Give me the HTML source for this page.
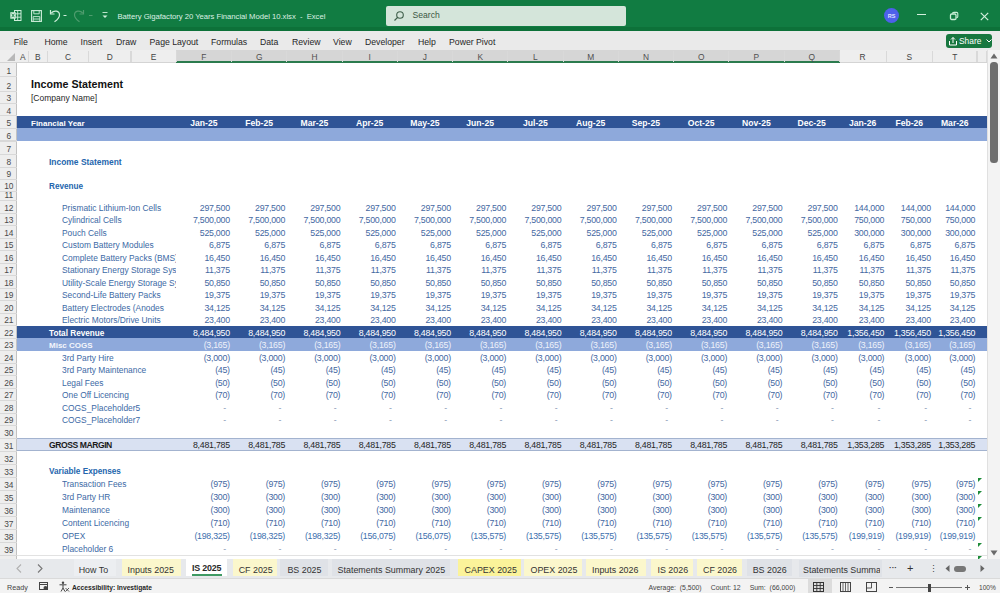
<!DOCTYPE html><html><head><meta charset="utf-8"><style>
*{margin:0;padding:0;box-sizing:border-box}
html,body{width:1000px;height:593px;overflow:hidden;background:#fff;font-family:"Liberation Sans", sans-serif;}
.a{position:absolute;white-space:pre;line-height:1.4}
.bx{position:absolute}
</style></head><body>
<div class="bx" style="left:0.00px;top:0.00px;width:1000.00px;height:31.00px;background:#117c42"></div>
<div class="bx" style="left:0.00px;top:27.00px;width:1000.00px;height:4.00px;background:#0d7139"></div>
<div class="bx" style="left:386.00px;top:6.00px;width:240.00px;height:20.00px;background:#d4e5da;border-radius:2px"></div>
<div class="a" style="left:412.50px;top:9.00px;font-size:8.6px;color:#3a5844;font-weight:400;">Search</div>
<svg class="bx" style="left:393px;top:10px" width="12" height="12" viewBox="0 0 12 12"><circle cx="7" cy="5" r="3.3" fill="none" stroke="#3f5f4a" stroke-width="1.1"/><line x1="4.6" y1="7.4" x2="1.5" y2="10.5" stroke="#3f5f4a" stroke-width="1.2"/></svg>
<div class="a" style="left:117.40px;top:12.00px;font-size:7.7px;color:#dcf0e2;font-weight:400;letter-spacing:-0.03px">Battery Gigafactory 20 Years Financial Model 10.xlsx  -  Excel</div>
<svg class="bx" style="left:10px;top:10px" width="12" height="11" viewBox="0 0 12 11">
<rect x="4.5" y="0.5" width="6.5" height="10" fill="none" stroke="#cfeedb" stroke-width="1"/>
<path d="M4.5 3.8 H11 M4.5 7.2 H11 M7.7 0.5 V10.5" stroke="#cfeedb" stroke-width="0.9"/>
<rect x="0.3" y="2.2" width="5.5" height="6.5" fill="#cfeedb"/>
<path d="M1.7 3.7 L4.4 7.2 M4.4 3.7 L1.7 7.2" stroke="#117c42" stroke-width="0.9"/></svg>
<svg class="bx" style="left:31px;top:9.5px" width="11" height="12" viewBox="0 0 11 12">
<rect x="0.6" y="0.6" width="9.8" height="10.8" fill="none" stroke="#cfeedb" stroke-width="1.1"/>
<path d="M2.8 0.6 V3.8 H8.2 V0.6" fill="none" stroke="#cfeedb" stroke-width="0.9"/>
<path d="M2.2 11.4 V6.6 H8.8 V11.4 M2.2 9 H8.8" fill="none" stroke="#cfeedb" stroke-width="0.9"/></svg>
<svg class="bx" style="left:49px;top:9px" width="20" height="14" viewBox="0 0 20 14">
<path d="M2.2 4.2 C5 0.8 10.5 1.5 10.5 6 C10.5 9 8 11 5.5 12.8" fill="none" stroke="#cfeedb" stroke-width="1.2"/>
<path d="M1.5 1 V5 H5.5" fill="none" stroke="#cfeedb" stroke-width="1.2"/>
<path d="M14.5 6.5 H17.5" stroke="#cfeedb" stroke-width="1"/></svg>
<svg class="bx" style="left:73px;top:9px" width="22" height="14" viewBox="0 0 22 14">
<path d="M9.8 4.2 C7 0.8 1.5 1.5 1.5 6 C1.5 9 4 11 6.5 12.8" fill="none" stroke="#4f9c6e" stroke-width="1.2"/>
<path d="M10.5 1 V5 H6.5" fill="none" stroke="#4f9c6e" stroke-width="1.2"/>
<path d="M16 6.5 H19.5" stroke="#4f9c6e" stroke-width="1"/></svg>
<svg class="bx" style="left:101px;top:11px" width="8" height="9" viewBox="0 0 8 9">
<line x1="1.5" y1="1.5" x2="6.5" y2="1.5" stroke="#cfeedb" stroke-width="0.9"/><path d="M1.5 4.5 L6.5 4.5 L4 7 Z" fill="#cfeedb"/></svg>
<div class="bx" style="left:884px;top:8px;width:15px;height:15px;border-radius:50%;background:#4d60ea"></div>
<div class="a" style="left:791.50px;width:200px;top:13.00px;font-size:5.5px;color:#e0e4ff;font-weight:700;text-align:center;">RS</div>
<div class="bx" style="left:917.00px;top:14.00px;width:9.00px;height:1.00px;background:#d4f0dd"></div>
<svg class="bx" style="left:949px;top:11px" width="10" height="10" viewBox="0 0 10 10">
<rect x="1.5" y="3" width="5.5" height="5.5" rx="1.2" fill="none" stroke="#c9eed6" stroke-width="1.3"/>
<path d="M3.2 2.6 Q3.6 1.4 4.8 1.4 H7.6 Q8.8 1.4 8.8 2.6 V5.4 Q8.8 6.6 7.4 6.8" fill="none" stroke="#c9eed6" stroke-width="1.1"/></svg>
<svg class="bx" style="left:980px;top:11.5px" width="9" height="9" viewBox="0 0 9 9">
<line x1="0.8" y1="0.8" x2="8.2" y2="8.2" stroke="#d4f0dd" stroke-width="1.2"/><line x1="8.2" y1="0.8" x2="0.8" y2="8.2" stroke="#d4f0dd" stroke-width="1.2"/></svg>
<div class="bx" style="left:0.00px;top:31.00px;width:1000.00px;height:19.00px;background:#eaeaea"></div>
<div class="a" style="left:13.75px;top:36.00px;font-size:8.7px;color:#262626;font-weight:400;">File</div>
<div class="a" style="left:44.50px;top:36.00px;font-size:8.7px;color:#262626;font-weight:400;">Home</div>
<div class="a" style="left:80.50px;top:36.00px;font-size:8.7px;color:#262626;font-weight:400;">Insert</div>
<div class="a" style="left:116.00px;top:36.00px;font-size:8.7px;color:#262626;font-weight:400;">Draw</div>
<div class="a" style="left:149.50px;top:36.00px;font-size:8.7px;color:#262626;font-weight:400;">Page Layout</div>
<div class="a" style="left:211.00px;top:36.00px;font-size:8.7px;color:#262626;font-weight:400;">Formulas</div>
<div class="a" style="left:260.00px;top:36.00px;font-size:8.7px;color:#262626;font-weight:400;">Data</div>
<div class="a" style="left:292.00px;top:36.00px;font-size:8.7px;color:#262626;font-weight:400;">Review</div>
<div class="a" style="left:333.00px;top:36.00px;font-size:8.7px;color:#262626;font-weight:400;">View</div>
<div class="a" style="left:365.00px;top:36.00px;font-size:8.7px;color:#262626;font-weight:400;">Developer</div>
<div class="a" style="left:418.00px;top:36.00px;font-size:8.7px;color:#262626;font-weight:400;">Help</div>
<div class="a" style="left:449.00px;top:36.00px;font-size:8.7px;color:#262626;font-weight:400;">Power Pivot</div>
<div class="bx" style="left:946.00px;top:34.00px;width:46.00px;height:14.00px;background:#17773f;border-radius:3px"></div>
<div class="a" style="left:959.00px;top:36.00px;font-size:8.4px;color:#ffffff;font-weight:400;">Share</div>
<svg class="bx" style="left:948px;top:36px" width="10" height="10" viewBox="0 0 10 10">
<path d="M1.5 5 V9 H8.5 V5" fill="none" stroke="#fff" stroke-width="1"/><path d="M5 7 V1.5 M3 3.5 L5 1.5 L7 3.5" fill="none" stroke="#fff" stroke-width="1"/></svg>
<svg class="bx" style="left:986px;top:39px" width="6" height="4" viewBox="0 0 6 4"><path d="M0.5 0.5 L3 3 L5.5 0.5" fill="none" stroke="#fff" stroke-width="1"/></svg>
<div class="bx" style="left:0.00px;top:50.00px;width:987.00px;height:13.00px;background:#eeeeee;border-bottom:1px solid #d4d4d4"></div>
<div class="bx" style="left:176.00px;top:50.00px;width:664.00px;height:13.00px;background:#d6d6d6"></div>
<div class="bx" style="left:176.00px;top:61.00px;width:664.00px;height:2.00px;background:#2b7b4e"></div>
<svg class="bx" style="left:5px;top:52px" width="11" height="10" viewBox="0 0 11 10"><path d="M10 1 L10 9 L2 9 Z" fill="#b8b8b8"/></svg>
<div class="bx" style="left:28.00px;top:51.00px;width:1.00px;height:11.00px;background:#d9d9d9"></div>
<div class="a" style="left:-77.20px;width:200px;top:52.00px;font-size:8.4px;color:#444444;font-weight:400;text-align:center;">A</div>
<div class="bx" style="left:47.00px;top:51.00px;width:1.00px;height:11.00px;background:#d9d9d9"></div>
<div class="a" style="left:-62.10px;width:200px;top:52.00px;font-size:8.4px;color:#444444;font-weight:400;text-align:center;">B</div>
<div class="bx" style="left:88.00px;top:51.00px;width:1.00px;height:11.00px;background:#d9d9d9"></div>
<div class="a" style="left:-32.10px;width:200px;top:52.00px;font-size:8.4px;color:#444444;font-weight:400;text-align:center;">C</div>
<div class="bx" style="left:130.00px;top:51.00px;width:2.00px;height:11.00px;background:#d9d9d9"></div>
<div class="a" style="left:9.80px;width:200px;top:52.00px;font-size:8.4px;color:#444444;font-weight:400;text-align:center;">D</div>
<div class="bx" style="left:176.00px;top:51.00px;width:1.00px;height:11.00px;background:#d9d9d9"></div>
<div class="a" style="left:53.65px;width:200px;top:52.00px;font-size:8.4px;color:#444444;font-weight:400;text-align:center;">E</div>
<div class="bx" style="left:231.00px;top:51.00px;width:1.00px;height:11.00px;background:#d9d9d9"></div>
<div class="a" style="left:103.93px;width:200px;top:52.00px;font-size:8.4px;color:#505050;font-weight:400;text-align:center;">F</div>
<div class="bx" style="left:286.00px;top:51.00px;width:1.00px;height:11.00px;background:#d9d9d9"></div>
<div class="a" style="left:159.18px;width:200px;top:52.00px;font-size:8.4px;color:#505050;font-weight:400;text-align:center;">G</div>
<div class="bx" style="left:342.00px;top:51.00px;width:1.00px;height:11.00px;background:#d9d9d9"></div>
<div class="a" style="left:214.43px;width:200px;top:52.00px;font-size:8.4px;color:#505050;font-weight:400;text-align:center;">H</div>
<div class="bx" style="left:397.00px;top:51.00px;width:1.00px;height:11.00px;background:#d9d9d9"></div>
<div class="a" style="left:269.68px;width:200px;top:52.00px;font-size:8.4px;color:#505050;font-weight:400;text-align:center;">I</div>
<div class="bx" style="left:452.00px;top:51.00px;width:1.00px;height:11.00px;background:#d9d9d9"></div>
<div class="a" style="left:324.93px;width:200px;top:52.00px;font-size:8.4px;color:#505050;font-weight:400;text-align:center;">J</div>
<div class="bx" style="left:507.00px;top:51.00px;width:1.00px;height:11.00px;background:#d9d9d9"></div>
<div class="a" style="left:380.18px;width:200px;top:52.00px;font-size:8.4px;color:#505050;font-weight:400;text-align:center;">K</div>
<div class="bx" style="left:563.00px;top:51.00px;width:1.00px;height:11.00px;background:#d9d9d9"></div>
<div class="a" style="left:435.42px;width:200px;top:52.00px;font-size:8.4px;color:#505050;font-weight:400;text-align:center;">L</div>
<div class="bx" style="left:618.00px;top:51.00px;width:1.00px;height:11.00px;background:#d9d9d9"></div>
<div class="a" style="left:490.67px;width:200px;top:52.00px;font-size:8.4px;color:#505050;font-weight:400;text-align:center;">M</div>
<div class="bx" style="left:673.00px;top:51.00px;width:1.00px;height:11.00px;background:#d9d9d9"></div>
<div class="a" style="left:545.92px;width:200px;top:52.00px;font-size:8.4px;color:#505050;font-weight:400;text-align:center;">N</div>
<div class="bx" style="left:728.00px;top:51.00px;width:1.00px;height:11.00px;background:#d9d9d9"></div>
<div class="a" style="left:601.17px;width:200px;top:52.00px;font-size:8.4px;color:#505050;font-weight:400;text-align:center;">O</div>
<div class="bx" style="left:784.00px;top:51.00px;width:1.00px;height:11.00px;background:#d9d9d9"></div>
<div class="a" style="left:656.42px;width:200px;top:52.00px;font-size:8.4px;color:#505050;font-weight:400;text-align:center;">P</div>
<div class="bx" style="left:839.00px;top:51.00px;width:1.00px;height:11.00px;background:#d9d9d9"></div>
<div class="a" style="left:711.67px;width:200px;top:52.00px;font-size:8.4px;color:#505050;font-weight:400;text-align:center;">Q</div>
<div class="bx" style="left:886.00px;top:51.00px;width:1.00px;height:11.00px;background:#d9d9d9"></div>
<div class="a" style="left:762.65px;width:200px;top:52.00px;font-size:8.4px;color:#444444;font-weight:400;text-align:center;">R</div>
<div class="bx" style="left:932.00px;top:51.00px;width:1.00px;height:11.00px;background:#d9d9d9"></div>
<div class="a" style="left:809.30px;width:200px;top:52.00px;font-size:8.4px;color:#444444;font-weight:400;text-align:center;">S</div>
<div class="bx" style="left:976.00px;top:51.00px;width:2.00px;height:11.00px;background:#d9d9d9"></div>
<div class="a" style="left:854.80px;width:200px;top:52.00px;font-size:8.4px;color:#444444;font-weight:400;text-align:center;">T</div>
<div class="bx" style="left:986.00px;top:51.00px;width:2.00px;height:11.00px;background:#d9d9d9"></div>
<div class="bx" style="left:0.00px;top:63.00px;width:17.00px;height:496.00px;background:#eeeeee;border-right:1px solid #c2c2c2"></div>
<div class="bx" style="left:0.00px;top:76.00px;width:17.00px;height:1.00px;background:#d8d8d8"></div>
<div class="a" style="left:-91.20px;width:200px;top:66.00px;font-size:8.4px;color:#4a4a4a;font-weight:400;text-align:center;">1</div>
<div class="bx" style="left:0.00px;top:91.00px;width:17.00px;height:1.00px;background:#d8d8d8"></div>
<div class="a" style="left:-91.20px;width:200px;top:81.00px;font-size:8.4px;color:#4a4a4a;font-weight:400;text-align:center;">2</div>
<div class="bx" style="left:0.00px;top:103.00px;width:17.00px;height:1.00px;background:#d8d8d8"></div>
<div class="a" style="left:-91.20px;width:200px;top:93.00px;font-size:8.4px;color:#4a4a4a;font-weight:400;text-align:center;">3</div>
<div class="bx" style="left:0.00px;top:115.00px;width:17.00px;height:1.00px;background:#d8d8d8"></div>
<div class="a" style="left:-91.20px;width:200px;top:106.00px;font-size:8.4px;color:#4a4a4a;font-weight:400;text-align:center;">4</div>
<div class="bx" style="left:0.00px;top:128.00px;width:17.00px;height:1.00px;background:#d8d8d8"></div>
<div class="a" style="left:-91.20px;width:200px;top:118.00px;font-size:8.4px;color:#4a4a4a;font-weight:400;text-align:center;">5</div>
<div class="bx" style="left:0.00px;top:140.00px;width:17.00px;height:2.00px;background:#d8d8d8"></div>
<div class="a" style="left:-91.20px;width:200px;top:131.00px;font-size:8.4px;color:#4a4a4a;font-weight:400;text-align:center;">6</div>
<div class="bx" style="left:0.00px;top:154.00px;width:17.00px;height:1.00px;background:#d8d8d8"></div>
<div class="a" style="left:-91.20px;width:200px;top:144.00px;font-size:8.4px;color:#4a4a4a;font-weight:400;text-align:center;">7</div>
<div class="bx" style="left:0.00px;top:167.00px;width:17.00px;height:1.00px;background:#d8d8d8"></div>
<div class="a" style="left:-91.20px;width:200px;top:157.00px;font-size:8.4px;color:#4a4a4a;font-weight:400;text-align:center;">8</div>
<div class="bx" style="left:0.00px;top:179.00px;width:17.00px;height:1.00px;background:#d8d8d8"></div>
<div class="a" style="left:-91.20px;width:200px;top:169.00px;font-size:8.4px;color:#4a4a4a;font-weight:400;text-align:center;">9</div>
<div class="bx" style="left:0.00px;top:191.00px;width:17.00px;height:1.00px;background:#d8d8d8"></div>
<div class="a" style="left:-91.20px;width:200px;top:181.00px;font-size:8.4px;color:#4a4a4a;font-weight:400;text-align:center;">10</div>
<div class="bx" style="left:0.00px;top:200.00px;width:17.00px;height:1.00px;background:#d8d8d8"></div>
<div class="a" style="left:-91.20px;width:200px;top:190.00px;font-size:8.4px;color:#4a4a4a;font-weight:400;text-align:center;">11</div>
<div class="bx" style="left:0.00px;top:213.00px;width:17.00px;height:1.00px;background:#d8d8d8"></div>
<div class="a" style="left:-91.20px;width:200px;top:203.00px;font-size:8.4px;color:#4a4a4a;font-weight:400;text-align:center;">12</div>
<div class="bx" style="left:0.00px;top:225.00px;width:17.00px;height:1.00px;background:#d8d8d8"></div>
<div class="a" style="left:-91.20px;width:200px;top:215.00px;font-size:8.4px;color:#4a4a4a;font-weight:400;text-align:center;">13</div>
<div class="bx" style="left:0.00px;top:238.00px;width:17.00px;height:1.00px;background:#d8d8d8"></div>
<div class="a" style="left:-91.20px;width:200px;top:228.00px;font-size:8.4px;color:#4a4a4a;font-weight:400;text-align:center;">14</div>
<div class="bx" style="left:0.00px;top:250.00px;width:17.00px;height:1.00px;background:#d8d8d8"></div>
<div class="a" style="left:-91.20px;width:200px;top:240.00px;font-size:8.4px;color:#4a4a4a;font-weight:400;text-align:center;">15</div>
<div class="bx" style="left:0.00px;top:263.00px;width:17.00px;height:1.00px;background:#d8d8d8"></div>
<div class="a" style="left:-91.20px;width:200px;top:253.00px;font-size:8.4px;color:#4a4a4a;font-weight:400;text-align:center;">16</div>
<div class="bx" style="left:0.00px;top:275.00px;width:17.00px;height:1.00px;background:#d8d8d8"></div>
<div class="a" style="left:-91.20px;width:200px;top:265.00px;font-size:8.4px;color:#4a4a4a;font-weight:400;text-align:center;">17</div>
<div class="bx" style="left:0.00px;top:288.00px;width:17.00px;height:1.00px;background:#d8d8d8"></div>
<div class="a" style="left:-91.20px;width:200px;top:278.00px;font-size:8.4px;color:#4a4a4a;font-weight:400;text-align:center;">18</div>
<div class="bx" style="left:0.00px;top:300.00px;width:17.00px;height:1.00px;background:#d8d8d8"></div>
<div class="a" style="left:-91.20px;width:200px;top:290.00px;font-size:8.4px;color:#4a4a4a;font-weight:400;text-align:center;">19</div>
<div class="bx" style="left:0.00px;top:313.00px;width:17.00px;height:1.00px;background:#d8d8d8"></div>
<div class="a" style="left:-91.20px;width:200px;top:303.00px;font-size:8.4px;color:#4a4a4a;font-weight:400;text-align:center;">20</div>
<div class="bx" style="left:0.00px;top:325.00px;width:17.00px;height:1.00px;background:#d8d8d8"></div>
<div class="a" style="left:-91.20px;width:200px;top:315.00px;font-size:8.4px;color:#4a4a4a;font-weight:400;text-align:center;">21</div>
<div class="bx" style="left:0.00px;top:338.00px;width:17.00px;height:1.00px;background:#d8d8d8"></div>
<div class="a" style="left:-91.20px;width:200px;top:328.00px;font-size:8.4px;color:#4a4a4a;font-weight:400;text-align:center;">22</div>
<div class="bx" style="left:0.00px;top:350.00px;width:17.00px;height:1.00px;background:#d8d8d8"></div>
<div class="a" style="left:-91.20px;width:200px;top:340.00px;font-size:8.4px;color:#4a4a4a;font-weight:400;text-align:center;">23</div>
<div class="bx" style="left:0.00px;top:363.00px;width:17.00px;height:1.00px;background:#d8d8d8"></div>
<div class="a" style="left:-91.20px;width:200px;top:353.00px;font-size:8.4px;color:#4a4a4a;font-weight:400;text-align:center;">24</div>
<div class="bx" style="left:0.00px;top:375.00px;width:17.00px;height:1.00px;background:#d8d8d8"></div>
<div class="a" style="left:-91.20px;width:200px;top:365.00px;font-size:8.4px;color:#4a4a4a;font-weight:400;text-align:center;">25</div>
<div class="bx" style="left:0.00px;top:388.00px;width:17.00px;height:1.00px;background:#d8d8d8"></div>
<div class="a" style="left:-91.20px;width:200px;top:378.00px;font-size:8.4px;color:#4a4a4a;font-weight:400;text-align:center;">26</div>
<div class="bx" style="left:0.00px;top:400.00px;width:17.00px;height:1.00px;background:#d8d8d8"></div>
<div class="a" style="left:-91.20px;width:200px;top:390.00px;font-size:8.4px;color:#4a4a4a;font-weight:400;text-align:center;">27</div>
<div class="bx" style="left:0.00px;top:413.00px;width:17.00px;height:1.00px;background:#d8d8d8"></div>
<div class="a" style="left:-91.20px;width:200px;top:403.00px;font-size:8.4px;color:#4a4a4a;font-weight:400;text-align:center;">28</div>
<div class="bx" style="left:0.00px;top:425.00px;width:17.00px;height:1.00px;background:#d8d8d8"></div>
<div class="a" style="left:-91.20px;width:200px;top:415.00px;font-size:8.4px;color:#4a4a4a;font-weight:400;text-align:center;">29</div>
<div class="bx" style="left:0.00px;top:438.00px;width:17.00px;height:1.00px;background:#d8d8d8"></div>
<div class="a" style="left:-91.20px;width:200px;top:428.00px;font-size:8.4px;color:#4a4a4a;font-weight:400;text-align:center;">30</div>
<div class="bx" style="left:0.00px;top:451.00px;width:17.00px;height:1.00px;background:#d8d8d8"></div>
<div class="a" style="left:-91.20px;width:200px;top:441.00px;font-size:8.4px;color:#4a4a4a;font-weight:400;text-align:center;">31</div>
<div class="bx" style="left:0.00px;top:464.00px;width:17.00px;height:1.00px;background:#d8d8d8"></div>
<div class="a" style="left:-91.20px;width:200px;top:454.00px;font-size:8.4px;color:#4a4a4a;font-weight:400;text-align:center;">32</div>
<div class="bx" style="left:0.00px;top:477.00px;width:17.00px;height:1.00px;background:#d8d8d8"></div>
<div class="a" style="left:-91.20px;width:200px;top:467.00px;font-size:8.4px;color:#4a4a4a;font-weight:400;text-align:center;">33</div>
<div class="bx" style="left:0.00px;top:490.00px;width:17.00px;height:1.00px;background:#d8d8d8"></div>
<div class="a" style="left:-91.20px;width:200px;top:480.00px;font-size:8.4px;color:#4a4a4a;font-weight:400;text-align:center;">34</div>
<div class="bx" style="left:0.00px;top:503.00px;width:17.00px;height:1.00px;background:#d8d8d8"></div>
<div class="a" style="left:-91.20px;width:200px;top:493.00px;font-size:8.4px;color:#4a4a4a;font-weight:400;text-align:center;">35</div>
<div class="bx" style="left:0.00px;top:516.00px;width:17.00px;height:1.00px;background:#d8d8d8"></div>
<div class="a" style="left:-91.20px;width:200px;top:506.00px;font-size:8.4px;color:#4a4a4a;font-weight:400;text-align:center;">36</div>
<div class="bx" style="left:0.00px;top:529.00px;width:17.00px;height:1.00px;background:#d8d8d8"></div>
<div class="a" style="left:-91.20px;width:200px;top:519.00px;font-size:8.4px;color:#4a4a4a;font-weight:400;text-align:center;">37</div>
<div class="bx" style="left:0.00px;top:542.00px;width:17.00px;height:1.00px;background:#d8d8d8"></div>
<div class="a" style="left:-91.20px;width:200px;top:532.00px;font-size:8.4px;color:#4a4a4a;font-weight:400;text-align:center;">38</div>
<div class="bx" style="left:0.00px;top:555.00px;width:17.00px;height:1.00px;background:#d8d8d8"></div>
<div class="a" style="left:-91.20px;width:200px;top:545.00px;font-size:8.4px;color:#4a4a4a;font-weight:400;text-align:center;">39</div>
<div class="bx" style="left:0.00px;top:568.00px;width:17.00px;height:1.00px;background:#d8d8d8"></div>
<div class="bx" style="left:17.00px;top:63.00px;width:970.00px;height:496.00px;background:#ffffff"></div>
<div class="bx" style="left:17.00px;top:116.00px;width:970.00px;height:12.00px;background:#2f5496;"></div>
<div class="bx" style="left:17.00px;top:128.00px;width:970.00px;height:13.00px;background:#8ea9db;"></div>
<div class="bx" style="left:17.00px;top:326.00px;width:970.00px;height:12.00px;background:#2f5496;"></div>
<div class="bx" style="left:17.00px;top:338.00px;width:970.00px;height:13.00px;background:#8ea9db;"></div>
<div class="bx" style="left:17.00px;top:438.00px;width:970.00px;height:13.00px;background:#d9e1f2;border-top:1px solid #a3b3cf;border-bottom:1px solid #a3b3cf"></div>
<div class="a" style="left:31.00px;top:77.00px;font-size:10.7px;color:#111;font-weight:700;">Income Statement</div>
<div class="a" style="left:31.00px;top:93.00px;font-size:8.5px;color:#262626;font-weight:400;">[Company Name]</div>
<div class="a" style="left:31.00px;top:118.00px;font-size:8.0px;color:#ffffff;font-weight:700;">Financial Year</div>
<div class="a" style="left:103.93px;width:200px;top:117.00px;font-size:8.6px;color:#ffffff;font-weight:700;text-align:center;">Jan-25</div>
<div class="a" style="left:159.18px;width:200px;top:117.00px;font-size:8.6px;color:#ffffff;font-weight:700;text-align:center;">Feb-25</div>
<div class="a" style="left:214.43px;width:200px;top:117.00px;font-size:8.6px;color:#ffffff;font-weight:700;text-align:center;">Mar-25</div>
<div class="a" style="left:269.68px;width:200px;top:117.00px;font-size:8.6px;color:#ffffff;font-weight:700;text-align:center;">Apr-25</div>
<div class="a" style="left:324.93px;width:200px;top:117.00px;font-size:8.6px;color:#ffffff;font-weight:700;text-align:center;">May-25</div>
<div class="a" style="left:380.18px;width:200px;top:117.00px;font-size:8.6px;color:#ffffff;font-weight:700;text-align:center;">Jun-25</div>
<div class="a" style="left:435.42px;width:200px;top:117.00px;font-size:8.6px;color:#ffffff;font-weight:700;text-align:center;">Jul-25</div>
<div class="a" style="left:490.67px;width:200px;top:117.00px;font-size:8.6px;color:#ffffff;font-weight:700;text-align:center;">Aug-25</div>
<div class="a" style="left:545.92px;width:200px;top:117.00px;font-size:8.6px;color:#ffffff;font-weight:700;text-align:center;">Sep-25</div>
<div class="a" style="left:601.17px;width:200px;top:117.00px;font-size:8.6px;color:#ffffff;font-weight:700;text-align:center;">Oct-25</div>
<div class="a" style="left:656.42px;width:200px;top:117.00px;font-size:8.6px;color:#ffffff;font-weight:700;text-align:center;">Nov-25</div>
<div class="a" style="left:711.67px;width:200px;top:117.00px;font-size:8.6px;color:#ffffff;font-weight:700;text-align:center;">Dec-25</div>
<div class="a" style="left:762.65px;width:200px;top:117.00px;font-size:8.6px;color:#ffffff;font-weight:700;text-align:center;">Jan-26</div>
<div class="a" style="left:809.30px;width:200px;top:117.00px;font-size:8.6px;color:#ffffff;font-weight:700;text-align:center;">Feb-26</div>
<div class="a" style="left:854.80px;width:200px;top:117.00px;font-size:8.6px;color:#ffffff;font-weight:700;text-align:center;">Mar-26</div>
<div class="a" style="left:49.00px;top:157.00px;font-size:8.45px;color:#2466ad;font-weight:700;">Income Statement</div>
<div class="a" style="left:49.00px;top:181.00px;font-size:8.2px;color:#2466ad;font-weight:700;">Revenue</div>
<div class="a" style="left:62px;top:203.00px;width:114px;overflow:hidden;line-height:1.4;font-size:8.4px;color:#3b69a5;font-weight:400">Prismatic Lithium-Ion Cells</div>
<div class="a" style="right:770.20px;top:202.00px;font-size:8.8px;color:#4468a2;font-weight:400;text-align:right;letter-spacing:-0.25px">297,500</div>
<div class="a" style="right:714.95px;top:202.00px;font-size:8.8px;color:#4468a2;font-weight:400;text-align:right;letter-spacing:-0.25px">297,500</div>
<div class="a" style="right:659.70px;top:202.00px;font-size:8.8px;color:#4468a2;font-weight:400;text-align:right;letter-spacing:-0.25px">297,500</div>
<div class="a" style="right:604.45px;top:202.00px;font-size:8.8px;color:#4468a2;font-weight:400;text-align:right;letter-spacing:-0.25px">297,500</div>
<div class="a" style="right:549.20px;top:202.00px;font-size:8.8px;color:#4468a2;font-weight:400;text-align:right;letter-spacing:-0.25px">297,500</div>
<div class="a" style="right:493.95px;top:202.00px;font-size:8.8px;color:#4468a2;font-weight:400;text-align:right;letter-spacing:-0.25px">297,500</div>
<div class="a" style="right:438.70px;top:202.00px;font-size:8.8px;color:#4468a2;font-weight:400;text-align:right;letter-spacing:-0.25px">297,500</div>
<div class="a" style="right:383.45px;top:202.00px;font-size:8.8px;color:#4468a2;font-weight:400;text-align:right;letter-spacing:-0.25px">297,500</div>
<div class="a" style="right:328.20px;top:202.00px;font-size:8.8px;color:#4468a2;font-weight:400;text-align:right;letter-spacing:-0.25px">297,500</div>
<div class="a" style="right:272.95px;top:202.00px;font-size:8.8px;color:#4468a2;font-weight:400;text-align:right;letter-spacing:-0.25px">297,500</div>
<div class="a" style="right:217.70px;top:202.00px;font-size:8.8px;color:#4468a2;font-weight:400;text-align:right;letter-spacing:-0.25px">297,500</div>
<div class="a" style="right:162.45px;top:202.00px;font-size:8.8px;color:#4468a2;font-weight:400;text-align:right;letter-spacing:-0.25px">297,500</div>
<div class="a" style="right:115.75px;top:202.00px;font-size:8.8px;color:#4468a2;font-weight:400;text-align:right;letter-spacing:-0.25px">144,000</div>
<div class="a" style="right:69.15px;top:202.00px;font-size:8.8px;color:#4468a2;font-weight:400;text-align:right;letter-spacing:-0.25px">144,000</div>
<div class="a" style="right:24.75px;top:202.00px;font-size:8.8px;color:#4468a2;font-weight:400;text-align:right;letter-spacing:-0.25px">144,000</div>
<div class="a" style="left:62px;top:215.00px;width:114px;overflow:hidden;line-height:1.4;font-size:8.4px;color:#3b69a5;font-weight:400">Cylindrical Cells</div>
<div class="a" style="right:770.20px;top:214.00px;font-size:8.8px;color:#4468a2;font-weight:400;text-align:right;letter-spacing:-0.25px">7,500,000</div>
<div class="a" style="right:714.95px;top:214.00px;font-size:8.8px;color:#4468a2;font-weight:400;text-align:right;letter-spacing:-0.25px">7,500,000</div>
<div class="a" style="right:659.70px;top:214.00px;font-size:8.8px;color:#4468a2;font-weight:400;text-align:right;letter-spacing:-0.25px">7,500,000</div>
<div class="a" style="right:604.45px;top:214.00px;font-size:8.8px;color:#4468a2;font-weight:400;text-align:right;letter-spacing:-0.25px">7,500,000</div>
<div class="a" style="right:549.20px;top:214.00px;font-size:8.8px;color:#4468a2;font-weight:400;text-align:right;letter-spacing:-0.25px">7,500,000</div>
<div class="a" style="right:493.95px;top:214.00px;font-size:8.8px;color:#4468a2;font-weight:400;text-align:right;letter-spacing:-0.25px">7,500,000</div>
<div class="a" style="right:438.70px;top:214.00px;font-size:8.8px;color:#4468a2;font-weight:400;text-align:right;letter-spacing:-0.25px">7,500,000</div>
<div class="a" style="right:383.45px;top:214.00px;font-size:8.8px;color:#4468a2;font-weight:400;text-align:right;letter-spacing:-0.25px">7,500,000</div>
<div class="a" style="right:328.20px;top:214.00px;font-size:8.8px;color:#4468a2;font-weight:400;text-align:right;letter-spacing:-0.25px">7,500,000</div>
<div class="a" style="right:272.95px;top:214.00px;font-size:8.8px;color:#4468a2;font-weight:400;text-align:right;letter-spacing:-0.25px">7,500,000</div>
<div class="a" style="right:217.70px;top:214.00px;font-size:8.8px;color:#4468a2;font-weight:400;text-align:right;letter-spacing:-0.25px">7,500,000</div>
<div class="a" style="right:162.45px;top:214.00px;font-size:8.8px;color:#4468a2;font-weight:400;text-align:right;letter-spacing:-0.25px">7,500,000</div>
<div class="a" style="right:115.75px;top:214.00px;font-size:8.8px;color:#4468a2;font-weight:400;text-align:right;letter-spacing:-0.25px">750,000</div>
<div class="a" style="right:69.15px;top:214.00px;font-size:8.8px;color:#4468a2;font-weight:400;text-align:right;letter-spacing:-0.25px">750,000</div>
<div class="a" style="right:24.75px;top:214.00px;font-size:8.8px;color:#4468a2;font-weight:400;text-align:right;letter-spacing:-0.25px">750,000</div>
<div class="a" style="left:62px;top:228.00px;width:114px;overflow:hidden;line-height:1.4;font-size:8.4px;color:#3b69a5;font-weight:400">Pouch Cells</div>
<div class="a" style="right:770.20px;top:227.00px;font-size:8.8px;color:#4468a2;font-weight:400;text-align:right;letter-spacing:-0.25px">525,000</div>
<div class="a" style="right:714.95px;top:227.00px;font-size:8.8px;color:#4468a2;font-weight:400;text-align:right;letter-spacing:-0.25px">525,000</div>
<div class="a" style="right:659.70px;top:227.00px;font-size:8.8px;color:#4468a2;font-weight:400;text-align:right;letter-spacing:-0.25px">525,000</div>
<div class="a" style="right:604.45px;top:227.00px;font-size:8.8px;color:#4468a2;font-weight:400;text-align:right;letter-spacing:-0.25px">525,000</div>
<div class="a" style="right:549.20px;top:227.00px;font-size:8.8px;color:#4468a2;font-weight:400;text-align:right;letter-spacing:-0.25px">525,000</div>
<div class="a" style="right:493.95px;top:227.00px;font-size:8.8px;color:#4468a2;font-weight:400;text-align:right;letter-spacing:-0.25px">525,000</div>
<div class="a" style="right:438.70px;top:227.00px;font-size:8.8px;color:#4468a2;font-weight:400;text-align:right;letter-spacing:-0.25px">525,000</div>
<div class="a" style="right:383.45px;top:227.00px;font-size:8.8px;color:#4468a2;font-weight:400;text-align:right;letter-spacing:-0.25px">525,000</div>
<div class="a" style="right:328.20px;top:227.00px;font-size:8.8px;color:#4468a2;font-weight:400;text-align:right;letter-spacing:-0.25px">525,000</div>
<div class="a" style="right:272.95px;top:227.00px;font-size:8.8px;color:#4468a2;font-weight:400;text-align:right;letter-spacing:-0.25px">525,000</div>
<div class="a" style="right:217.70px;top:227.00px;font-size:8.8px;color:#4468a2;font-weight:400;text-align:right;letter-spacing:-0.25px">525,000</div>
<div class="a" style="right:162.45px;top:227.00px;font-size:8.8px;color:#4468a2;font-weight:400;text-align:right;letter-spacing:-0.25px">525,000</div>
<div class="a" style="right:115.75px;top:227.00px;font-size:8.8px;color:#4468a2;font-weight:400;text-align:right;letter-spacing:-0.25px">300,000</div>
<div class="a" style="right:69.15px;top:227.00px;font-size:8.8px;color:#4468a2;font-weight:400;text-align:right;letter-spacing:-0.25px">300,000</div>
<div class="a" style="right:24.75px;top:227.00px;font-size:8.8px;color:#4468a2;font-weight:400;text-align:right;letter-spacing:-0.25px">300,000</div>
<div class="a" style="left:62px;top:240.00px;width:114px;overflow:hidden;line-height:1.4;font-size:8.4px;color:#3b69a5;font-weight:400">Custom Battery Modules</div>
<div class="a" style="right:770.20px;top:239.00px;font-size:8.8px;color:#4468a2;font-weight:400;text-align:right;letter-spacing:-0.25px">6,875</div>
<div class="a" style="right:714.95px;top:239.00px;font-size:8.8px;color:#4468a2;font-weight:400;text-align:right;letter-spacing:-0.25px">6,875</div>
<div class="a" style="right:659.70px;top:239.00px;font-size:8.8px;color:#4468a2;font-weight:400;text-align:right;letter-spacing:-0.25px">6,875</div>
<div class="a" style="right:604.45px;top:239.00px;font-size:8.8px;color:#4468a2;font-weight:400;text-align:right;letter-spacing:-0.25px">6,875</div>
<div class="a" style="right:549.20px;top:239.00px;font-size:8.8px;color:#4468a2;font-weight:400;text-align:right;letter-spacing:-0.25px">6,875</div>
<div class="a" style="right:493.95px;top:239.00px;font-size:8.8px;color:#4468a2;font-weight:400;text-align:right;letter-spacing:-0.25px">6,875</div>
<div class="a" style="right:438.70px;top:239.00px;font-size:8.8px;color:#4468a2;font-weight:400;text-align:right;letter-spacing:-0.25px">6,875</div>
<div class="a" style="right:383.45px;top:239.00px;font-size:8.8px;color:#4468a2;font-weight:400;text-align:right;letter-spacing:-0.25px">6,875</div>
<div class="a" style="right:328.20px;top:239.00px;font-size:8.8px;color:#4468a2;font-weight:400;text-align:right;letter-spacing:-0.25px">6,875</div>
<div class="a" style="right:272.95px;top:239.00px;font-size:8.8px;color:#4468a2;font-weight:400;text-align:right;letter-spacing:-0.25px">6,875</div>
<div class="a" style="right:217.70px;top:239.00px;font-size:8.8px;color:#4468a2;font-weight:400;text-align:right;letter-spacing:-0.25px">6,875</div>
<div class="a" style="right:162.45px;top:239.00px;font-size:8.8px;color:#4468a2;font-weight:400;text-align:right;letter-spacing:-0.25px">6,875</div>
<div class="a" style="right:115.75px;top:239.00px;font-size:8.8px;color:#4468a2;font-weight:400;text-align:right;letter-spacing:-0.25px">6,875</div>
<div class="a" style="right:69.15px;top:239.00px;font-size:8.8px;color:#4468a2;font-weight:400;text-align:right;letter-spacing:-0.25px">6,875</div>
<div class="a" style="right:24.75px;top:239.00px;font-size:8.8px;color:#4468a2;font-weight:400;text-align:right;letter-spacing:-0.25px">6,875</div>
<div class="a" style="left:62px;top:253.00px;width:114px;overflow:hidden;line-height:1.4;font-size:8.4px;color:#3b69a5;font-weight:400">Complete Battery Packs (BMS)</div>
<div class="a" style="right:770.20px;top:252.00px;font-size:8.8px;color:#4468a2;font-weight:400;text-align:right;letter-spacing:-0.25px">16,450</div>
<div class="a" style="right:714.95px;top:252.00px;font-size:8.8px;color:#4468a2;font-weight:400;text-align:right;letter-spacing:-0.25px">16,450</div>
<div class="a" style="right:659.70px;top:252.00px;font-size:8.8px;color:#4468a2;font-weight:400;text-align:right;letter-spacing:-0.25px">16,450</div>
<div class="a" style="right:604.45px;top:252.00px;font-size:8.8px;color:#4468a2;font-weight:400;text-align:right;letter-spacing:-0.25px">16,450</div>
<div class="a" style="right:549.20px;top:252.00px;font-size:8.8px;color:#4468a2;font-weight:400;text-align:right;letter-spacing:-0.25px">16,450</div>
<div class="a" style="right:493.95px;top:252.00px;font-size:8.8px;color:#4468a2;font-weight:400;text-align:right;letter-spacing:-0.25px">16,450</div>
<div class="a" style="right:438.70px;top:252.00px;font-size:8.8px;color:#4468a2;font-weight:400;text-align:right;letter-spacing:-0.25px">16,450</div>
<div class="a" style="right:383.45px;top:252.00px;font-size:8.8px;color:#4468a2;font-weight:400;text-align:right;letter-spacing:-0.25px">16,450</div>
<div class="a" style="right:328.20px;top:252.00px;font-size:8.8px;color:#4468a2;font-weight:400;text-align:right;letter-spacing:-0.25px">16,450</div>
<div class="a" style="right:272.95px;top:252.00px;font-size:8.8px;color:#4468a2;font-weight:400;text-align:right;letter-spacing:-0.25px">16,450</div>
<div class="a" style="right:217.70px;top:252.00px;font-size:8.8px;color:#4468a2;font-weight:400;text-align:right;letter-spacing:-0.25px">16,450</div>
<div class="a" style="right:162.45px;top:252.00px;font-size:8.8px;color:#4468a2;font-weight:400;text-align:right;letter-spacing:-0.25px">16,450</div>
<div class="a" style="right:115.75px;top:252.00px;font-size:8.8px;color:#4468a2;font-weight:400;text-align:right;letter-spacing:-0.25px">16,450</div>
<div class="a" style="right:69.15px;top:252.00px;font-size:8.8px;color:#4468a2;font-weight:400;text-align:right;letter-spacing:-0.25px">16,450</div>
<div class="a" style="right:24.75px;top:252.00px;font-size:8.8px;color:#4468a2;font-weight:400;text-align:right;letter-spacing:-0.25px">16,450</div>
<div class="a" style="left:62px;top:265.00px;width:114px;overflow:hidden;line-height:1.4;font-size:8.4px;color:#3b69a5;font-weight:400">Stationary Energy Storage Syst</div>
<div class="a" style="right:770.20px;top:264.00px;font-size:8.8px;color:#4468a2;font-weight:400;text-align:right;letter-spacing:-0.25px">11,375</div>
<div class="a" style="right:714.95px;top:264.00px;font-size:8.8px;color:#4468a2;font-weight:400;text-align:right;letter-spacing:-0.25px">11,375</div>
<div class="a" style="right:659.70px;top:264.00px;font-size:8.8px;color:#4468a2;font-weight:400;text-align:right;letter-spacing:-0.25px">11,375</div>
<div class="a" style="right:604.45px;top:264.00px;font-size:8.8px;color:#4468a2;font-weight:400;text-align:right;letter-spacing:-0.25px">11,375</div>
<div class="a" style="right:549.20px;top:264.00px;font-size:8.8px;color:#4468a2;font-weight:400;text-align:right;letter-spacing:-0.25px">11,375</div>
<div class="a" style="right:493.95px;top:264.00px;font-size:8.8px;color:#4468a2;font-weight:400;text-align:right;letter-spacing:-0.25px">11,375</div>
<div class="a" style="right:438.70px;top:264.00px;font-size:8.8px;color:#4468a2;font-weight:400;text-align:right;letter-spacing:-0.25px">11,375</div>
<div class="a" style="right:383.45px;top:264.00px;font-size:8.8px;color:#4468a2;font-weight:400;text-align:right;letter-spacing:-0.25px">11,375</div>
<div class="a" style="right:328.20px;top:264.00px;font-size:8.8px;color:#4468a2;font-weight:400;text-align:right;letter-spacing:-0.25px">11,375</div>
<div class="a" style="right:272.95px;top:264.00px;font-size:8.8px;color:#4468a2;font-weight:400;text-align:right;letter-spacing:-0.25px">11,375</div>
<div class="a" style="right:217.70px;top:264.00px;font-size:8.8px;color:#4468a2;font-weight:400;text-align:right;letter-spacing:-0.25px">11,375</div>
<div class="a" style="right:162.45px;top:264.00px;font-size:8.8px;color:#4468a2;font-weight:400;text-align:right;letter-spacing:-0.25px">11,375</div>
<div class="a" style="right:115.75px;top:264.00px;font-size:8.8px;color:#4468a2;font-weight:400;text-align:right;letter-spacing:-0.25px">11,375</div>
<div class="a" style="right:69.15px;top:264.00px;font-size:8.8px;color:#4468a2;font-weight:400;text-align:right;letter-spacing:-0.25px">11,375</div>
<div class="a" style="right:24.75px;top:264.00px;font-size:8.8px;color:#4468a2;font-weight:400;text-align:right;letter-spacing:-0.25px">11,375</div>
<div class="a" style="left:62px;top:278.00px;width:114px;overflow:hidden;line-height:1.4;font-size:8.4px;color:#3b69a5;font-weight:400">Utility-Scale Energy Storage Sy</div>
<div class="a" style="right:770.20px;top:277.00px;font-size:8.8px;color:#4468a2;font-weight:400;text-align:right;letter-spacing:-0.25px">50,850</div>
<div class="a" style="right:714.95px;top:277.00px;font-size:8.8px;color:#4468a2;font-weight:400;text-align:right;letter-spacing:-0.25px">50,850</div>
<div class="a" style="right:659.70px;top:277.00px;font-size:8.8px;color:#4468a2;font-weight:400;text-align:right;letter-spacing:-0.25px">50,850</div>
<div class="a" style="right:604.45px;top:277.00px;font-size:8.8px;color:#4468a2;font-weight:400;text-align:right;letter-spacing:-0.25px">50,850</div>
<div class="a" style="right:549.20px;top:277.00px;font-size:8.8px;color:#4468a2;font-weight:400;text-align:right;letter-spacing:-0.25px">50,850</div>
<div class="a" style="right:493.95px;top:277.00px;font-size:8.8px;color:#4468a2;font-weight:400;text-align:right;letter-spacing:-0.25px">50,850</div>
<div class="a" style="right:438.70px;top:277.00px;font-size:8.8px;color:#4468a2;font-weight:400;text-align:right;letter-spacing:-0.25px">50,850</div>
<div class="a" style="right:383.45px;top:277.00px;font-size:8.8px;color:#4468a2;font-weight:400;text-align:right;letter-spacing:-0.25px">50,850</div>
<div class="a" style="right:328.20px;top:277.00px;font-size:8.8px;color:#4468a2;font-weight:400;text-align:right;letter-spacing:-0.25px">50,850</div>
<div class="a" style="right:272.95px;top:277.00px;font-size:8.8px;color:#4468a2;font-weight:400;text-align:right;letter-spacing:-0.25px">50,850</div>
<div class="a" style="right:217.70px;top:277.00px;font-size:8.8px;color:#4468a2;font-weight:400;text-align:right;letter-spacing:-0.25px">50,850</div>
<div class="a" style="right:162.45px;top:277.00px;font-size:8.8px;color:#4468a2;font-weight:400;text-align:right;letter-spacing:-0.25px">50,850</div>
<div class="a" style="right:115.75px;top:277.00px;font-size:8.8px;color:#4468a2;font-weight:400;text-align:right;letter-spacing:-0.25px">50,850</div>
<div class="a" style="right:69.15px;top:277.00px;font-size:8.8px;color:#4468a2;font-weight:400;text-align:right;letter-spacing:-0.25px">50,850</div>
<div class="a" style="right:24.75px;top:277.00px;font-size:8.8px;color:#4468a2;font-weight:400;text-align:right;letter-spacing:-0.25px">50,850</div>
<div class="a" style="left:62px;top:290.00px;width:114px;overflow:hidden;line-height:1.4;font-size:8.4px;color:#3b69a5;font-weight:400">Second-Life Battery Packs</div>
<div class="a" style="right:770.20px;top:289.00px;font-size:8.8px;color:#4468a2;font-weight:400;text-align:right;letter-spacing:-0.25px">19,375</div>
<div class="a" style="right:714.95px;top:289.00px;font-size:8.8px;color:#4468a2;font-weight:400;text-align:right;letter-spacing:-0.25px">19,375</div>
<div class="a" style="right:659.70px;top:289.00px;font-size:8.8px;color:#4468a2;font-weight:400;text-align:right;letter-spacing:-0.25px">19,375</div>
<div class="a" style="right:604.45px;top:289.00px;font-size:8.8px;color:#4468a2;font-weight:400;text-align:right;letter-spacing:-0.25px">19,375</div>
<div class="a" style="right:549.20px;top:289.00px;font-size:8.8px;color:#4468a2;font-weight:400;text-align:right;letter-spacing:-0.25px">19,375</div>
<div class="a" style="right:493.95px;top:289.00px;font-size:8.8px;color:#4468a2;font-weight:400;text-align:right;letter-spacing:-0.25px">19,375</div>
<div class="a" style="right:438.70px;top:289.00px;font-size:8.8px;color:#4468a2;font-weight:400;text-align:right;letter-spacing:-0.25px">19,375</div>
<div class="a" style="right:383.45px;top:289.00px;font-size:8.8px;color:#4468a2;font-weight:400;text-align:right;letter-spacing:-0.25px">19,375</div>
<div class="a" style="right:328.20px;top:289.00px;font-size:8.8px;color:#4468a2;font-weight:400;text-align:right;letter-spacing:-0.25px">19,375</div>
<div class="a" style="right:272.95px;top:289.00px;font-size:8.8px;color:#4468a2;font-weight:400;text-align:right;letter-spacing:-0.25px">19,375</div>
<div class="a" style="right:217.70px;top:289.00px;font-size:8.8px;color:#4468a2;font-weight:400;text-align:right;letter-spacing:-0.25px">19,375</div>
<div class="a" style="right:162.45px;top:289.00px;font-size:8.8px;color:#4468a2;font-weight:400;text-align:right;letter-spacing:-0.25px">19,375</div>
<div class="a" style="right:115.75px;top:289.00px;font-size:8.8px;color:#4468a2;font-weight:400;text-align:right;letter-spacing:-0.25px">19,375</div>
<div class="a" style="right:69.15px;top:289.00px;font-size:8.8px;color:#4468a2;font-weight:400;text-align:right;letter-spacing:-0.25px">19,375</div>
<div class="a" style="right:24.75px;top:289.00px;font-size:8.8px;color:#4468a2;font-weight:400;text-align:right;letter-spacing:-0.25px">19,375</div>
<div class="a" style="left:62px;top:303.00px;width:114px;overflow:hidden;line-height:1.4;font-size:8.4px;color:#3b69a5;font-weight:400">Battery Electrodes (Anodes</div>
<div class="a" style="right:770.20px;top:302.00px;font-size:8.8px;color:#4468a2;font-weight:400;text-align:right;letter-spacing:-0.25px">34,125</div>
<div class="a" style="right:714.95px;top:302.00px;font-size:8.8px;color:#4468a2;font-weight:400;text-align:right;letter-spacing:-0.25px">34,125</div>
<div class="a" style="right:659.70px;top:302.00px;font-size:8.8px;color:#4468a2;font-weight:400;text-align:right;letter-spacing:-0.25px">34,125</div>
<div class="a" style="right:604.45px;top:302.00px;font-size:8.8px;color:#4468a2;font-weight:400;text-align:right;letter-spacing:-0.25px">34,125</div>
<div class="a" style="right:549.20px;top:302.00px;font-size:8.8px;color:#4468a2;font-weight:400;text-align:right;letter-spacing:-0.25px">34,125</div>
<div class="a" style="right:493.95px;top:302.00px;font-size:8.8px;color:#4468a2;font-weight:400;text-align:right;letter-spacing:-0.25px">34,125</div>
<div class="a" style="right:438.70px;top:302.00px;font-size:8.8px;color:#4468a2;font-weight:400;text-align:right;letter-spacing:-0.25px">34,125</div>
<div class="a" style="right:383.45px;top:302.00px;font-size:8.8px;color:#4468a2;font-weight:400;text-align:right;letter-spacing:-0.25px">34,125</div>
<div class="a" style="right:328.20px;top:302.00px;font-size:8.8px;color:#4468a2;font-weight:400;text-align:right;letter-spacing:-0.25px">34,125</div>
<div class="a" style="right:272.95px;top:302.00px;font-size:8.8px;color:#4468a2;font-weight:400;text-align:right;letter-spacing:-0.25px">34,125</div>
<div class="a" style="right:217.70px;top:302.00px;font-size:8.8px;color:#4468a2;font-weight:400;text-align:right;letter-spacing:-0.25px">34,125</div>
<div class="a" style="right:162.45px;top:302.00px;font-size:8.8px;color:#4468a2;font-weight:400;text-align:right;letter-spacing:-0.25px">34,125</div>
<div class="a" style="right:115.75px;top:302.00px;font-size:8.8px;color:#4468a2;font-weight:400;text-align:right;letter-spacing:-0.25px">34,125</div>
<div class="a" style="right:69.15px;top:302.00px;font-size:8.8px;color:#4468a2;font-weight:400;text-align:right;letter-spacing:-0.25px">34,125</div>
<div class="a" style="right:24.75px;top:302.00px;font-size:8.8px;color:#4468a2;font-weight:400;text-align:right;letter-spacing:-0.25px">34,125</div>
<div class="a" style="left:62px;top:315.00px;width:114px;overflow:hidden;line-height:1.4;font-size:8.4px;color:#3b69a5;font-weight:400">Electric Motors/Drive Units</div>
<div class="a" style="right:770.20px;top:314.00px;font-size:8.8px;color:#4468a2;font-weight:400;text-align:right;letter-spacing:-0.25px">23,400</div>
<div class="a" style="right:714.95px;top:314.00px;font-size:8.8px;color:#4468a2;font-weight:400;text-align:right;letter-spacing:-0.25px">23,400</div>
<div class="a" style="right:659.70px;top:314.00px;font-size:8.8px;color:#4468a2;font-weight:400;text-align:right;letter-spacing:-0.25px">23,400</div>
<div class="a" style="right:604.45px;top:314.00px;font-size:8.8px;color:#4468a2;font-weight:400;text-align:right;letter-spacing:-0.25px">23,400</div>
<div class="a" style="right:549.20px;top:314.00px;font-size:8.8px;color:#4468a2;font-weight:400;text-align:right;letter-spacing:-0.25px">23,400</div>
<div class="a" style="right:493.95px;top:314.00px;font-size:8.8px;color:#4468a2;font-weight:400;text-align:right;letter-spacing:-0.25px">23,400</div>
<div class="a" style="right:438.70px;top:314.00px;font-size:8.8px;color:#4468a2;font-weight:400;text-align:right;letter-spacing:-0.25px">23,400</div>
<div class="a" style="right:383.45px;top:314.00px;font-size:8.8px;color:#4468a2;font-weight:400;text-align:right;letter-spacing:-0.25px">23,400</div>
<div class="a" style="right:328.20px;top:314.00px;font-size:8.8px;color:#4468a2;font-weight:400;text-align:right;letter-spacing:-0.25px">23,400</div>
<div class="a" style="right:272.95px;top:314.00px;font-size:8.8px;color:#4468a2;font-weight:400;text-align:right;letter-spacing:-0.25px">23,400</div>
<div class="a" style="right:217.70px;top:314.00px;font-size:8.8px;color:#4468a2;font-weight:400;text-align:right;letter-spacing:-0.25px">23,400</div>
<div class="a" style="right:162.45px;top:314.00px;font-size:8.8px;color:#4468a2;font-weight:400;text-align:right;letter-spacing:-0.25px">23,400</div>
<div class="a" style="right:115.75px;top:314.00px;font-size:8.8px;color:#4468a2;font-weight:400;text-align:right;letter-spacing:-0.25px">23,400</div>
<div class="a" style="right:69.15px;top:314.00px;font-size:8.8px;color:#4468a2;font-weight:400;text-align:right;letter-spacing:-0.25px">23,400</div>
<div class="a" style="right:24.75px;top:314.00px;font-size:8.8px;color:#4468a2;font-weight:400;text-align:right;letter-spacing:-0.25px">23,400</div>
<div class="a" style="left:49.00px;top:328.00px;font-size:8.2px;color:#ffffff;font-weight:700;">Total Revenue</div>
<div class="a" style="right:770.20px;top:327.00px;font-size:8.8px;color:#ffffff;font-weight:400;text-align:right;letter-spacing:-0.25px">8,484,950</div>
<div class="a" style="right:714.95px;top:327.00px;font-size:8.8px;color:#ffffff;font-weight:400;text-align:right;letter-spacing:-0.25px">8,484,950</div>
<div class="a" style="right:659.70px;top:327.00px;font-size:8.8px;color:#ffffff;font-weight:400;text-align:right;letter-spacing:-0.25px">8,484,950</div>
<div class="a" style="right:604.45px;top:327.00px;font-size:8.8px;color:#ffffff;font-weight:400;text-align:right;letter-spacing:-0.25px">8,484,950</div>
<div class="a" style="right:549.20px;top:327.00px;font-size:8.8px;color:#ffffff;font-weight:400;text-align:right;letter-spacing:-0.25px">8,484,950</div>
<div class="a" style="right:493.95px;top:327.00px;font-size:8.8px;color:#ffffff;font-weight:400;text-align:right;letter-spacing:-0.25px">8,484,950</div>
<div class="a" style="right:438.70px;top:327.00px;font-size:8.8px;color:#ffffff;font-weight:400;text-align:right;letter-spacing:-0.25px">8,484,950</div>
<div class="a" style="right:383.45px;top:327.00px;font-size:8.8px;color:#ffffff;font-weight:400;text-align:right;letter-spacing:-0.25px">8,484,950</div>
<div class="a" style="right:328.20px;top:327.00px;font-size:8.8px;color:#ffffff;font-weight:400;text-align:right;letter-spacing:-0.25px">8,484,950</div>
<div class="a" style="right:272.95px;top:327.00px;font-size:8.8px;color:#ffffff;font-weight:400;text-align:right;letter-spacing:-0.25px">8,484,950</div>
<div class="a" style="right:217.70px;top:327.00px;font-size:8.8px;color:#ffffff;font-weight:400;text-align:right;letter-spacing:-0.25px">8,484,950</div>
<div class="a" style="right:162.45px;top:327.00px;font-size:8.8px;color:#ffffff;font-weight:400;text-align:right;letter-spacing:-0.25px">8,484,950</div>
<div class="a" style="right:115.75px;top:327.00px;font-size:8.8px;color:#ffffff;font-weight:400;text-align:right;letter-spacing:-0.25px">1,356,450</div>
<div class="a" style="right:69.15px;top:327.00px;font-size:8.8px;color:#ffffff;font-weight:400;text-align:right;letter-spacing:-0.25px">1,356,450</div>
<div class="a" style="right:24.75px;top:327.00px;font-size:8.8px;color:#ffffff;font-weight:400;text-align:right;letter-spacing:-0.25px">1,356,450</div>
<div class="a" style="left:49.00px;top:340.00px;font-size:8.0px;color:#f4f6fb;font-weight:700;">Misc COGS</div>
<div class="a" style="right:770.20px;top:339.00px;font-size:8.8px;color:#eef2fa;font-weight:400;text-align:right;letter-spacing:-0.25px">(3,165)</div>
<div class="a" style="right:714.95px;top:339.00px;font-size:8.8px;color:#eef2fa;font-weight:400;text-align:right;letter-spacing:-0.25px">(3,165)</div>
<div class="a" style="right:659.70px;top:339.00px;font-size:8.8px;color:#eef2fa;font-weight:400;text-align:right;letter-spacing:-0.25px">(3,165)</div>
<div class="a" style="right:604.45px;top:339.00px;font-size:8.8px;color:#eef2fa;font-weight:400;text-align:right;letter-spacing:-0.25px">(3,165)</div>
<div class="a" style="right:549.20px;top:339.00px;font-size:8.8px;color:#eef2fa;font-weight:400;text-align:right;letter-spacing:-0.25px">(3,165)</div>
<div class="a" style="right:493.95px;top:339.00px;font-size:8.8px;color:#eef2fa;font-weight:400;text-align:right;letter-spacing:-0.25px">(3,165)</div>
<div class="a" style="right:438.70px;top:339.00px;font-size:8.8px;color:#eef2fa;font-weight:400;text-align:right;letter-spacing:-0.25px">(3,165)</div>
<div class="a" style="right:383.45px;top:339.00px;font-size:8.8px;color:#eef2fa;font-weight:400;text-align:right;letter-spacing:-0.25px">(3,165)</div>
<div class="a" style="right:328.20px;top:339.00px;font-size:8.8px;color:#eef2fa;font-weight:400;text-align:right;letter-spacing:-0.25px">(3,165)</div>
<div class="a" style="right:272.95px;top:339.00px;font-size:8.8px;color:#eef2fa;font-weight:400;text-align:right;letter-spacing:-0.25px">(3,165)</div>
<div class="a" style="right:217.70px;top:339.00px;font-size:8.8px;color:#eef2fa;font-weight:400;text-align:right;letter-spacing:-0.25px">(3,165)</div>
<div class="a" style="right:162.45px;top:339.00px;font-size:8.8px;color:#eef2fa;font-weight:400;text-align:right;letter-spacing:-0.25px">(3,165)</div>
<div class="a" style="right:115.75px;top:339.00px;font-size:8.8px;color:#eef2fa;font-weight:400;text-align:right;letter-spacing:-0.25px">(3,165)</div>
<div class="a" style="right:69.15px;top:339.00px;font-size:8.8px;color:#eef2fa;font-weight:400;text-align:right;letter-spacing:-0.25px">(3,165)</div>
<div class="a" style="right:24.75px;top:339.00px;font-size:8.8px;color:#eef2fa;font-weight:400;text-align:right;letter-spacing:-0.25px">(3,165)</div>
<div class="a" style="left:62px;top:353.00px;width:114px;overflow:hidden;line-height:1.4;font-size:8.4px;color:#3b69a5;font-weight:400">3rd Party Hire</div>
<div class="a" style="right:770.20px;top:352.00px;font-size:8.8px;color:#4468a2;font-weight:400;text-align:right;letter-spacing:-0.25px">(3,000)</div>
<div class="a" style="right:714.95px;top:352.00px;font-size:8.8px;color:#4468a2;font-weight:400;text-align:right;letter-spacing:-0.25px">(3,000)</div>
<div class="a" style="right:659.70px;top:352.00px;font-size:8.8px;color:#4468a2;font-weight:400;text-align:right;letter-spacing:-0.25px">(3,000)</div>
<div class="a" style="right:604.45px;top:352.00px;font-size:8.8px;color:#4468a2;font-weight:400;text-align:right;letter-spacing:-0.25px">(3,000)</div>
<div class="a" style="right:549.20px;top:352.00px;font-size:8.8px;color:#4468a2;font-weight:400;text-align:right;letter-spacing:-0.25px">(3,000)</div>
<div class="a" style="right:493.95px;top:352.00px;font-size:8.8px;color:#4468a2;font-weight:400;text-align:right;letter-spacing:-0.25px">(3,000)</div>
<div class="a" style="right:438.70px;top:352.00px;font-size:8.8px;color:#4468a2;font-weight:400;text-align:right;letter-spacing:-0.25px">(3,000)</div>
<div class="a" style="right:383.45px;top:352.00px;font-size:8.8px;color:#4468a2;font-weight:400;text-align:right;letter-spacing:-0.25px">(3,000)</div>
<div class="a" style="right:328.20px;top:352.00px;font-size:8.8px;color:#4468a2;font-weight:400;text-align:right;letter-spacing:-0.25px">(3,000)</div>
<div class="a" style="right:272.95px;top:352.00px;font-size:8.8px;color:#4468a2;font-weight:400;text-align:right;letter-spacing:-0.25px">(3,000)</div>
<div class="a" style="right:217.70px;top:352.00px;font-size:8.8px;color:#4468a2;font-weight:400;text-align:right;letter-spacing:-0.25px">(3,000)</div>
<div class="a" style="right:162.45px;top:352.00px;font-size:8.8px;color:#4468a2;font-weight:400;text-align:right;letter-spacing:-0.25px">(3,000)</div>
<div class="a" style="right:115.75px;top:352.00px;font-size:8.8px;color:#4468a2;font-weight:400;text-align:right;letter-spacing:-0.25px">(3,000)</div>
<div class="a" style="right:69.15px;top:352.00px;font-size:8.8px;color:#4468a2;font-weight:400;text-align:right;letter-spacing:-0.25px">(3,000)</div>
<div class="a" style="right:24.75px;top:352.00px;font-size:8.8px;color:#4468a2;font-weight:400;text-align:right;letter-spacing:-0.25px">(3,000)</div>
<div class="a" style="left:62px;top:365.00px;width:114px;overflow:hidden;line-height:1.4;font-size:8.4px;color:#3b69a5;font-weight:400">3rd Party Maintenance</div>
<div class="a" style="right:770.20px;top:364.00px;font-size:8.8px;color:#4468a2;font-weight:400;text-align:right;letter-spacing:-0.25px">(45)</div>
<div class="a" style="right:714.95px;top:364.00px;font-size:8.8px;color:#4468a2;font-weight:400;text-align:right;letter-spacing:-0.25px">(45)</div>
<div class="a" style="right:659.70px;top:364.00px;font-size:8.8px;color:#4468a2;font-weight:400;text-align:right;letter-spacing:-0.25px">(45)</div>
<div class="a" style="right:604.45px;top:364.00px;font-size:8.8px;color:#4468a2;font-weight:400;text-align:right;letter-spacing:-0.25px">(45)</div>
<div class="a" style="right:549.20px;top:364.00px;font-size:8.8px;color:#4468a2;font-weight:400;text-align:right;letter-spacing:-0.25px">(45)</div>
<div class="a" style="right:493.95px;top:364.00px;font-size:8.8px;color:#4468a2;font-weight:400;text-align:right;letter-spacing:-0.25px">(45)</div>
<div class="a" style="right:438.70px;top:364.00px;font-size:8.8px;color:#4468a2;font-weight:400;text-align:right;letter-spacing:-0.25px">(45)</div>
<div class="a" style="right:383.45px;top:364.00px;font-size:8.8px;color:#4468a2;font-weight:400;text-align:right;letter-spacing:-0.25px">(45)</div>
<div class="a" style="right:328.20px;top:364.00px;font-size:8.8px;color:#4468a2;font-weight:400;text-align:right;letter-spacing:-0.25px">(45)</div>
<div class="a" style="right:272.95px;top:364.00px;font-size:8.8px;color:#4468a2;font-weight:400;text-align:right;letter-spacing:-0.25px">(45)</div>
<div class="a" style="right:217.70px;top:364.00px;font-size:8.8px;color:#4468a2;font-weight:400;text-align:right;letter-spacing:-0.25px">(45)</div>
<div class="a" style="right:162.45px;top:364.00px;font-size:8.8px;color:#4468a2;font-weight:400;text-align:right;letter-spacing:-0.25px">(45)</div>
<div class="a" style="right:115.75px;top:364.00px;font-size:8.8px;color:#4468a2;font-weight:400;text-align:right;letter-spacing:-0.25px">(45)</div>
<div class="a" style="right:69.15px;top:364.00px;font-size:8.8px;color:#4468a2;font-weight:400;text-align:right;letter-spacing:-0.25px">(45)</div>
<div class="a" style="right:24.75px;top:364.00px;font-size:8.8px;color:#4468a2;font-weight:400;text-align:right;letter-spacing:-0.25px">(45)</div>
<div class="a" style="left:62px;top:378.00px;width:114px;overflow:hidden;line-height:1.4;font-size:8.4px;color:#3b69a5;font-weight:400">Legal Fees</div>
<div class="a" style="right:770.20px;top:377.00px;font-size:8.8px;color:#4468a2;font-weight:400;text-align:right;letter-spacing:-0.25px">(50)</div>
<div class="a" style="right:714.95px;top:377.00px;font-size:8.8px;color:#4468a2;font-weight:400;text-align:right;letter-spacing:-0.25px">(50)</div>
<div class="a" style="right:659.70px;top:377.00px;font-size:8.8px;color:#4468a2;font-weight:400;text-align:right;letter-spacing:-0.25px">(50)</div>
<div class="a" style="right:604.45px;top:377.00px;font-size:8.8px;color:#4468a2;font-weight:400;text-align:right;letter-spacing:-0.25px">(50)</div>
<div class="a" style="right:549.20px;top:377.00px;font-size:8.8px;color:#4468a2;font-weight:400;text-align:right;letter-spacing:-0.25px">(50)</div>
<div class="a" style="right:493.95px;top:377.00px;font-size:8.8px;color:#4468a2;font-weight:400;text-align:right;letter-spacing:-0.25px">(50)</div>
<div class="a" style="right:438.70px;top:377.00px;font-size:8.8px;color:#4468a2;font-weight:400;text-align:right;letter-spacing:-0.25px">(50)</div>
<div class="a" style="right:383.45px;top:377.00px;font-size:8.8px;color:#4468a2;font-weight:400;text-align:right;letter-spacing:-0.25px">(50)</div>
<div class="a" style="right:328.20px;top:377.00px;font-size:8.8px;color:#4468a2;font-weight:400;text-align:right;letter-spacing:-0.25px">(50)</div>
<div class="a" style="right:272.95px;top:377.00px;font-size:8.8px;color:#4468a2;font-weight:400;text-align:right;letter-spacing:-0.25px">(50)</div>
<div class="a" style="right:217.70px;top:377.00px;font-size:8.8px;color:#4468a2;font-weight:400;text-align:right;letter-spacing:-0.25px">(50)</div>
<div class="a" style="right:162.45px;top:377.00px;font-size:8.8px;color:#4468a2;font-weight:400;text-align:right;letter-spacing:-0.25px">(50)</div>
<div class="a" style="right:115.75px;top:377.00px;font-size:8.8px;color:#4468a2;font-weight:400;text-align:right;letter-spacing:-0.25px">(50)</div>
<div class="a" style="right:69.15px;top:377.00px;font-size:8.8px;color:#4468a2;font-weight:400;text-align:right;letter-spacing:-0.25px">(50)</div>
<div class="a" style="right:24.75px;top:377.00px;font-size:8.8px;color:#4468a2;font-weight:400;text-align:right;letter-spacing:-0.25px">(50)</div>
<div class="a" style="left:62px;top:390.00px;width:114px;overflow:hidden;line-height:1.4;font-size:8.4px;color:#3b69a5;font-weight:400">One Off Licencing</div>
<div class="a" style="right:770.20px;top:389.00px;font-size:8.8px;color:#4468a2;font-weight:400;text-align:right;letter-spacing:-0.25px">(70)</div>
<div class="a" style="right:714.95px;top:389.00px;font-size:8.8px;color:#4468a2;font-weight:400;text-align:right;letter-spacing:-0.25px">(70)</div>
<div class="a" style="right:659.70px;top:389.00px;font-size:8.8px;color:#4468a2;font-weight:400;text-align:right;letter-spacing:-0.25px">(70)</div>
<div class="a" style="right:604.45px;top:389.00px;font-size:8.8px;color:#4468a2;font-weight:400;text-align:right;letter-spacing:-0.25px">(70)</div>
<div class="a" style="right:549.20px;top:389.00px;font-size:8.8px;color:#4468a2;font-weight:400;text-align:right;letter-spacing:-0.25px">(70)</div>
<div class="a" style="right:493.95px;top:389.00px;font-size:8.8px;color:#4468a2;font-weight:400;text-align:right;letter-spacing:-0.25px">(70)</div>
<div class="a" style="right:438.70px;top:389.00px;font-size:8.8px;color:#4468a2;font-weight:400;text-align:right;letter-spacing:-0.25px">(70)</div>
<div class="a" style="right:383.45px;top:389.00px;font-size:8.8px;color:#4468a2;font-weight:400;text-align:right;letter-spacing:-0.25px">(70)</div>
<div class="a" style="right:328.20px;top:389.00px;font-size:8.8px;color:#4468a2;font-weight:400;text-align:right;letter-spacing:-0.25px">(70)</div>
<div class="a" style="right:272.95px;top:389.00px;font-size:8.8px;color:#4468a2;font-weight:400;text-align:right;letter-spacing:-0.25px">(70)</div>
<div class="a" style="right:217.70px;top:389.00px;font-size:8.8px;color:#4468a2;font-weight:400;text-align:right;letter-spacing:-0.25px">(70)</div>
<div class="a" style="right:162.45px;top:389.00px;font-size:8.8px;color:#4468a2;font-weight:400;text-align:right;letter-spacing:-0.25px">(70)</div>
<div class="a" style="right:115.75px;top:389.00px;font-size:8.8px;color:#4468a2;font-weight:400;text-align:right;letter-spacing:-0.25px">(70)</div>
<div class="a" style="right:69.15px;top:389.00px;font-size:8.8px;color:#4468a2;font-weight:400;text-align:right;letter-spacing:-0.25px">(70)</div>
<div class="a" style="right:24.75px;top:389.00px;font-size:8.8px;color:#4468a2;font-weight:400;text-align:right;letter-spacing:-0.25px">(70)</div>
<div class="a" style="left:62px;top:403.00px;width:114px;overflow:hidden;line-height:1.4;font-size:8.4px;color:#3b69a5;font-weight:400">COGS_Placeholder5</div>
<div class="a" style="right:774.20px;top:402.00px;font-size:8.8px;color:#8a9ab5;font-weight:400;text-align:right;letter-spacing:-0.25px">-</div>
<div class="a" style="right:718.95px;top:402.00px;font-size:8.8px;color:#8a9ab5;font-weight:400;text-align:right;letter-spacing:-0.25px">-</div>
<div class="a" style="right:663.70px;top:402.00px;font-size:8.8px;color:#8a9ab5;font-weight:400;text-align:right;letter-spacing:-0.25px">-</div>
<div class="a" style="right:608.45px;top:402.00px;font-size:8.8px;color:#8a9ab5;font-weight:400;text-align:right;letter-spacing:-0.25px">-</div>
<div class="a" style="right:553.20px;top:402.00px;font-size:8.8px;color:#8a9ab5;font-weight:400;text-align:right;letter-spacing:-0.25px">-</div>
<div class="a" style="right:497.95px;top:402.00px;font-size:8.8px;color:#8a9ab5;font-weight:400;text-align:right;letter-spacing:-0.25px">-</div>
<div class="a" style="right:442.70px;top:402.00px;font-size:8.8px;color:#8a9ab5;font-weight:400;text-align:right;letter-spacing:-0.25px">-</div>
<div class="a" style="right:387.45px;top:402.00px;font-size:8.8px;color:#8a9ab5;font-weight:400;text-align:right;letter-spacing:-0.25px">-</div>
<div class="a" style="right:332.20px;top:402.00px;font-size:8.8px;color:#8a9ab5;font-weight:400;text-align:right;letter-spacing:-0.25px">-</div>
<div class="a" style="right:276.95px;top:402.00px;font-size:8.8px;color:#8a9ab5;font-weight:400;text-align:right;letter-spacing:-0.25px">-</div>
<div class="a" style="right:221.70px;top:402.00px;font-size:8.8px;color:#8a9ab5;font-weight:400;text-align:right;letter-spacing:-0.25px">-</div>
<div class="a" style="right:166.45px;top:402.00px;font-size:8.8px;color:#8a9ab5;font-weight:400;text-align:right;letter-spacing:-0.25px">-</div>
<div class="a" style="right:119.75px;top:402.00px;font-size:8.8px;color:#8a9ab5;font-weight:400;text-align:right;letter-spacing:-0.25px">-</div>
<div class="a" style="right:73.15px;top:402.00px;font-size:8.8px;color:#8a9ab5;font-weight:400;text-align:right;letter-spacing:-0.25px">-</div>
<div class="a" style="right:28.75px;top:402.00px;font-size:8.8px;color:#8a9ab5;font-weight:400;text-align:right;letter-spacing:-0.25px">-</div>
<div class="a" style="left:62px;top:415.00px;width:114px;overflow:hidden;line-height:1.4;font-size:8.4px;color:#3b69a5;font-weight:400">COGS_Placeholder7</div>
<div class="a" style="right:774.20px;top:414.00px;font-size:8.8px;color:#8a9ab5;font-weight:400;text-align:right;letter-spacing:-0.25px">-</div>
<div class="a" style="right:718.95px;top:414.00px;font-size:8.8px;color:#8a9ab5;font-weight:400;text-align:right;letter-spacing:-0.25px">-</div>
<div class="a" style="right:663.70px;top:414.00px;font-size:8.8px;color:#8a9ab5;font-weight:400;text-align:right;letter-spacing:-0.25px">-</div>
<div class="a" style="right:608.45px;top:414.00px;font-size:8.8px;color:#8a9ab5;font-weight:400;text-align:right;letter-spacing:-0.25px">-</div>
<div class="a" style="right:553.20px;top:414.00px;font-size:8.8px;color:#8a9ab5;font-weight:400;text-align:right;letter-spacing:-0.25px">-</div>
<div class="a" style="right:497.95px;top:414.00px;font-size:8.8px;color:#8a9ab5;font-weight:400;text-align:right;letter-spacing:-0.25px">-</div>
<div class="a" style="right:442.70px;top:414.00px;font-size:8.8px;color:#8a9ab5;font-weight:400;text-align:right;letter-spacing:-0.25px">-</div>
<div class="a" style="right:387.45px;top:414.00px;font-size:8.8px;color:#8a9ab5;font-weight:400;text-align:right;letter-spacing:-0.25px">-</div>
<div class="a" style="right:332.20px;top:414.00px;font-size:8.8px;color:#8a9ab5;font-weight:400;text-align:right;letter-spacing:-0.25px">-</div>
<div class="a" style="right:276.95px;top:414.00px;font-size:8.8px;color:#8a9ab5;font-weight:400;text-align:right;letter-spacing:-0.25px">-</div>
<div class="a" style="right:221.70px;top:414.00px;font-size:8.8px;color:#8a9ab5;font-weight:400;text-align:right;letter-spacing:-0.25px">-</div>
<div class="a" style="right:166.45px;top:414.00px;font-size:8.8px;color:#8a9ab5;font-weight:400;text-align:right;letter-spacing:-0.25px">-</div>
<div class="a" style="right:119.75px;top:414.00px;font-size:8.8px;color:#8a9ab5;font-weight:400;text-align:right;letter-spacing:-0.25px">-</div>
<div class="a" style="right:73.15px;top:414.00px;font-size:8.8px;color:#8a9ab5;font-weight:400;text-align:right;letter-spacing:-0.25px">-</div>
<div class="a" style="right:28.75px;top:414.00px;font-size:8.8px;color:#8a9ab5;font-weight:400;text-align:right;letter-spacing:-0.25px">-</div>
<div class="a" style="left:49.00px;top:439.00px;font-size:8.6px;color:#1a1a1a;font-weight:700;letter-spacing:-0.45px">GROSS MARGIN</div>
<div class="a" style="right:770.20px;top:439.00px;font-size:8.8px;color:#262626;font-weight:400;text-align:right;letter-spacing:-0.25px">8,481,785</div>
<div class="a" style="right:714.95px;top:439.00px;font-size:8.8px;color:#262626;font-weight:400;text-align:right;letter-spacing:-0.25px">8,481,785</div>
<div class="a" style="right:659.70px;top:439.00px;font-size:8.8px;color:#262626;font-weight:400;text-align:right;letter-spacing:-0.25px">8,481,785</div>
<div class="a" style="right:604.45px;top:439.00px;font-size:8.8px;color:#262626;font-weight:400;text-align:right;letter-spacing:-0.25px">8,481,785</div>
<div class="a" style="right:549.20px;top:439.00px;font-size:8.8px;color:#262626;font-weight:400;text-align:right;letter-spacing:-0.25px">8,481,785</div>
<div class="a" style="right:493.95px;top:439.00px;font-size:8.8px;color:#262626;font-weight:400;text-align:right;letter-spacing:-0.25px">8,481,785</div>
<div class="a" style="right:438.70px;top:439.00px;font-size:8.8px;color:#262626;font-weight:400;text-align:right;letter-spacing:-0.25px">8,481,785</div>
<div class="a" style="right:383.45px;top:439.00px;font-size:8.8px;color:#262626;font-weight:400;text-align:right;letter-spacing:-0.25px">8,481,785</div>
<div class="a" style="right:328.20px;top:439.00px;font-size:8.8px;color:#262626;font-weight:400;text-align:right;letter-spacing:-0.25px">8,481,785</div>
<div class="a" style="right:272.95px;top:439.00px;font-size:8.8px;color:#262626;font-weight:400;text-align:right;letter-spacing:-0.25px">8,481,785</div>
<div class="a" style="right:217.70px;top:439.00px;font-size:8.8px;color:#262626;font-weight:400;text-align:right;letter-spacing:-0.25px">8,481,785</div>
<div class="a" style="right:162.45px;top:439.00px;font-size:8.8px;color:#262626;font-weight:400;text-align:right;letter-spacing:-0.25px">8,481,785</div>
<div class="a" style="right:115.75px;top:439.00px;font-size:8.8px;color:#262626;font-weight:400;text-align:right;letter-spacing:-0.25px">1,353,285</div>
<div class="a" style="right:69.15px;top:439.00px;font-size:8.8px;color:#262626;font-weight:400;text-align:right;letter-spacing:-0.25px">1,353,285</div>
<div class="a" style="right:24.75px;top:439.00px;font-size:8.8px;color:#262626;font-weight:400;text-align:right;letter-spacing:-0.25px">1,353,285</div>
<div class="a" style="left:49.00px;top:466.00px;font-size:8.2px;color:#2466ad;font-weight:700;">Variable Expenses</div>
<div class="a" style="left:62px;top:479.00px;width:114px;overflow:hidden;line-height:1.4;font-size:8.4px;color:#3b69a5;font-weight:400">Transaction Fees</div>
<div class="a" style="right:770.20px;top:478.00px;font-size:8.8px;color:#4468a2;font-weight:400;text-align:right;letter-spacing:-0.25px">(975)</div>
<div class="a" style="right:714.95px;top:478.00px;font-size:8.8px;color:#4468a2;font-weight:400;text-align:right;letter-spacing:-0.25px">(975)</div>
<div class="a" style="right:659.70px;top:478.00px;font-size:8.8px;color:#4468a2;font-weight:400;text-align:right;letter-spacing:-0.25px">(975)</div>
<div class="a" style="right:604.45px;top:478.00px;font-size:8.8px;color:#4468a2;font-weight:400;text-align:right;letter-spacing:-0.25px">(975)</div>
<div class="a" style="right:549.20px;top:478.00px;font-size:8.8px;color:#4468a2;font-weight:400;text-align:right;letter-spacing:-0.25px">(975)</div>
<div class="a" style="right:493.95px;top:478.00px;font-size:8.8px;color:#4468a2;font-weight:400;text-align:right;letter-spacing:-0.25px">(975)</div>
<div class="a" style="right:438.70px;top:478.00px;font-size:8.8px;color:#4468a2;font-weight:400;text-align:right;letter-spacing:-0.25px">(975)</div>
<div class="a" style="right:383.45px;top:478.00px;font-size:8.8px;color:#4468a2;font-weight:400;text-align:right;letter-spacing:-0.25px">(975)</div>
<div class="a" style="right:328.20px;top:478.00px;font-size:8.8px;color:#4468a2;font-weight:400;text-align:right;letter-spacing:-0.25px">(975)</div>
<div class="a" style="right:272.95px;top:478.00px;font-size:8.8px;color:#4468a2;font-weight:400;text-align:right;letter-spacing:-0.25px">(975)</div>
<div class="a" style="right:217.70px;top:478.00px;font-size:8.8px;color:#4468a2;font-weight:400;text-align:right;letter-spacing:-0.25px">(975)</div>
<div class="a" style="right:162.45px;top:478.00px;font-size:8.8px;color:#4468a2;font-weight:400;text-align:right;letter-spacing:-0.25px">(975)</div>
<div class="a" style="right:115.75px;top:478.00px;font-size:8.8px;color:#4468a2;font-weight:400;text-align:right;letter-spacing:-0.25px">(975)</div>
<div class="a" style="right:69.15px;top:478.00px;font-size:8.8px;color:#4468a2;font-weight:400;text-align:right;letter-spacing:-0.25px">(975)</div>
<div class="a" style="right:24.75px;top:478.00px;font-size:8.8px;color:#4468a2;font-weight:400;text-align:right;letter-spacing:-0.25px">(975)</div>
<div class="a" style="left:62px;top:492.00px;width:114px;overflow:hidden;line-height:1.4;font-size:8.4px;color:#3b69a5;font-weight:400">3rd Party HR</div>
<div class="a" style="right:770.20px;top:491.00px;font-size:8.8px;color:#4468a2;font-weight:400;text-align:right;letter-spacing:-0.25px">(300)</div>
<div class="a" style="right:714.95px;top:491.00px;font-size:8.8px;color:#4468a2;font-weight:400;text-align:right;letter-spacing:-0.25px">(300)</div>
<div class="a" style="right:659.70px;top:491.00px;font-size:8.8px;color:#4468a2;font-weight:400;text-align:right;letter-spacing:-0.25px">(300)</div>
<div class="a" style="right:604.45px;top:491.00px;font-size:8.8px;color:#4468a2;font-weight:400;text-align:right;letter-spacing:-0.25px">(300)</div>
<div class="a" style="right:549.20px;top:491.00px;font-size:8.8px;color:#4468a2;font-weight:400;text-align:right;letter-spacing:-0.25px">(300)</div>
<div class="a" style="right:493.95px;top:491.00px;font-size:8.8px;color:#4468a2;font-weight:400;text-align:right;letter-spacing:-0.25px">(300)</div>
<div class="a" style="right:438.70px;top:491.00px;font-size:8.8px;color:#4468a2;font-weight:400;text-align:right;letter-spacing:-0.25px">(300)</div>
<div class="a" style="right:383.45px;top:491.00px;font-size:8.8px;color:#4468a2;font-weight:400;text-align:right;letter-spacing:-0.25px">(300)</div>
<div class="a" style="right:328.20px;top:491.00px;font-size:8.8px;color:#4468a2;font-weight:400;text-align:right;letter-spacing:-0.25px">(300)</div>
<div class="a" style="right:272.95px;top:491.00px;font-size:8.8px;color:#4468a2;font-weight:400;text-align:right;letter-spacing:-0.25px">(300)</div>
<div class="a" style="right:217.70px;top:491.00px;font-size:8.8px;color:#4468a2;font-weight:400;text-align:right;letter-spacing:-0.25px">(300)</div>
<div class="a" style="right:162.45px;top:491.00px;font-size:8.8px;color:#4468a2;font-weight:400;text-align:right;letter-spacing:-0.25px">(300)</div>
<div class="a" style="right:115.75px;top:491.00px;font-size:8.8px;color:#4468a2;font-weight:400;text-align:right;letter-spacing:-0.25px">(300)</div>
<div class="a" style="right:69.15px;top:491.00px;font-size:8.8px;color:#4468a2;font-weight:400;text-align:right;letter-spacing:-0.25px">(300)</div>
<div class="a" style="right:24.75px;top:491.00px;font-size:8.8px;color:#4468a2;font-weight:400;text-align:right;letter-spacing:-0.25px">(300)</div>
<div class="a" style="left:62px;top:505.00px;width:114px;overflow:hidden;line-height:1.4;font-size:8.4px;color:#3b69a5;font-weight:400">Maintenance</div>
<div class="a" style="right:770.20px;top:504.00px;font-size:8.8px;color:#4468a2;font-weight:400;text-align:right;letter-spacing:-0.25px">(300)</div>
<div class="a" style="right:714.95px;top:504.00px;font-size:8.8px;color:#4468a2;font-weight:400;text-align:right;letter-spacing:-0.25px">(300)</div>
<div class="a" style="right:659.70px;top:504.00px;font-size:8.8px;color:#4468a2;font-weight:400;text-align:right;letter-spacing:-0.25px">(300)</div>
<div class="a" style="right:604.45px;top:504.00px;font-size:8.8px;color:#4468a2;font-weight:400;text-align:right;letter-spacing:-0.25px">(300)</div>
<div class="a" style="right:549.20px;top:504.00px;font-size:8.8px;color:#4468a2;font-weight:400;text-align:right;letter-spacing:-0.25px">(300)</div>
<div class="a" style="right:493.95px;top:504.00px;font-size:8.8px;color:#4468a2;font-weight:400;text-align:right;letter-spacing:-0.25px">(300)</div>
<div class="a" style="right:438.70px;top:504.00px;font-size:8.8px;color:#4468a2;font-weight:400;text-align:right;letter-spacing:-0.25px">(300)</div>
<div class="a" style="right:383.45px;top:504.00px;font-size:8.8px;color:#4468a2;font-weight:400;text-align:right;letter-spacing:-0.25px">(300)</div>
<div class="a" style="right:328.20px;top:504.00px;font-size:8.8px;color:#4468a2;font-weight:400;text-align:right;letter-spacing:-0.25px">(300)</div>
<div class="a" style="right:272.95px;top:504.00px;font-size:8.8px;color:#4468a2;font-weight:400;text-align:right;letter-spacing:-0.25px">(300)</div>
<div class="a" style="right:217.70px;top:504.00px;font-size:8.8px;color:#4468a2;font-weight:400;text-align:right;letter-spacing:-0.25px">(300)</div>
<div class="a" style="right:162.45px;top:504.00px;font-size:8.8px;color:#4468a2;font-weight:400;text-align:right;letter-spacing:-0.25px">(300)</div>
<div class="a" style="right:115.75px;top:504.00px;font-size:8.8px;color:#4468a2;font-weight:400;text-align:right;letter-spacing:-0.25px">(300)</div>
<div class="a" style="right:69.15px;top:504.00px;font-size:8.8px;color:#4468a2;font-weight:400;text-align:right;letter-spacing:-0.25px">(300)</div>
<div class="a" style="right:24.75px;top:504.00px;font-size:8.8px;color:#4468a2;font-weight:400;text-align:right;letter-spacing:-0.25px">(300)</div>
<div class="a" style="left:62px;top:518.00px;width:114px;overflow:hidden;line-height:1.4;font-size:8.4px;color:#3b69a5;font-weight:400">Content Licencing</div>
<div class="a" style="right:770.20px;top:517.00px;font-size:8.8px;color:#4468a2;font-weight:400;text-align:right;letter-spacing:-0.25px">(710)</div>
<div class="a" style="right:714.95px;top:517.00px;font-size:8.8px;color:#4468a2;font-weight:400;text-align:right;letter-spacing:-0.25px">(710)</div>
<div class="a" style="right:659.70px;top:517.00px;font-size:8.8px;color:#4468a2;font-weight:400;text-align:right;letter-spacing:-0.25px">(710)</div>
<div class="a" style="right:604.45px;top:517.00px;font-size:8.8px;color:#4468a2;font-weight:400;text-align:right;letter-spacing:-0.25px">(710)</div>
<div class="a" style="right:549.20px;top:517.00px;font-size:8.8px;color:#4468a2;font-weight:400;text-align:right;letter-spacing:-0.25px">(710)</div>
<div class="a" style="right:493.95px;top:517.00px;font-size:8.8px;color:#4468a2;font-weight:400;text-align:right;letter-spacing:-0.25px">(710)</div>
<div class="a" style="right:438.70px;top:517.00px;font-size:8.8px;color:#4468a2;font-weight:400;text-align:right;letter-spacing:-0.25px">(710)</div>
<div class="a" style="right:383.45px;top:517.00px;font-size:8.8px;color:#4468a2;font-weight:400;text-align:right;letter-spacing:-0.25px">(710)</div>
<div class="a" style="right:328.20px;top:517.00px;font-size:8.8px;color:#4468a2;font-weight:400;text-align:right;letter-spacing:-0.25px">(710)</div>
<div class="a" style="right:272.95px;top:517.00px;font-size:8.8px;color:#4468a2;font-weight:400;text-align:right;letter-spacing:-0.25px">(710)</div>
<div class="a" style="right:217.70px;top:517.00px;font-size:8.8px;color:#4468a2;font-weight:400;text-align:right;letter-spacing:-0.25px">(710)</div>
<div class="a" style="right:162.45px;top:517.00px;font-size:8.8px;color:#4468a2;font-weight:400;text-align:right;letter-spacing:-0.25px">(710)</div>
<div class="a" style="right:115.75px;top:517.00px;font-size:8.8px;color:#4468a2;font-weight:400;text-align:right;letter-spacing:-0.25px">(710)</div>
<div class="a" style="right:69.15px;top:517.00px;font-size:8.8px;color:#4468a2;font-weight:400;text-align:right;letter-spacing:-0.25px">(710)</div>
<div class="a" style="right:24.75px;top:517.00px;font-size:8.8px;color:#4468a2;font-weight:400;text-align:right;letter-spacing:-0.25px">(710)</div>
<div class="a" style="left:62px;top:531.00px;width:114px;overflow:hidden;line-height:1.4;font-size:8.4px;color:#3b69a5;font-weight:400">OPEX</div>
<div class="a" style="right:770.20px;top:530.00px;font-size:8.8px;color:#3d6fae;font-weight:400;text-align:right;letter-spacing:-0.25px">(198,325)</div>
<div class="a" style="right:714.95px;top:530.00px;font-size:8.8px;color:#3d6fae;font-weight:400;text-align:right;letter-spacing:-0.25px">(198,325)</div>
<div class="a" style="right:659.70px;top:530.00px;font-size:8.8px;color:#3d6fae;font-weight:400;text-align:right;letter-spacing:-0.25px">(198,325)</div>
<div class="a" style="right:604.45px;top:530.00px;font-size:8.8px;color:#3d6fae;font-weight:400;text-align:right;letter-spacing:-0.25px">(156,075)</div>
<div class="a" style="right:549.20px;top:530.00px;font-size:8.8px;color:#3d6fae;font-weight:400;text-align:right;letter-spacing:-0.25px">(156,075)</div>
<div class="a" style="right:493.95px;top:530.00px;font-size:8.8px;color:#3d6fae;font-weight:400;text-align:right;letter-spacing:-0.25px">(135,575)</div>
<div class="a" style="right:438.70px;top:530.00px;font-size:8.8px;color:#3d6fae;font-weight:400;text-align:right;letter-spacing:-0.25px">(135,575)</div>
<div class="a" style="right:383.45px;top:530.00px;font-size:8.8px;color:#3d6fae;font-weight:400;text-align:right;letter-spacing:-0.25px">(135,575)</div>
<div class="a" style="right:328.20px;top:530.00px;font-size:8.8px;color:#3d6fae;font-weight:400;text-align:right;letter-spacing:-0.25px">(135,575)</div>
<div class="a" style="right:272.95px;top:530.00px;font-size:8.8px;color:#3d6fae;font-weight:400;text-align:right;letter-spacing:-0.25px">(135,575)</div>
<div class="a" style="right:217.70px;top:530.00px;font-size:8.8px;color:#3d6fae;font-weight:400;text-align:right;letter-spacing:-0.25px">(135,575)</div>
<div class="a" style="right:162.45px;top:530.00px;font-size:8.8px;color:#3d6fae;font-weight:400;text-align:right;letter-spacing:-0.25px">(135,575)</div>
<div class="a" style="right:115.75px;top:530.00px;font-size:8.8px;color:#3d6fae;font-weight:400;text-align:right;letter-spacing:-0.25px">(199,919)</div>
<div class="a" style="right:69.15px;top:530.00px;font-size:8.8px;color:#3d6fae;font-weight:400;text-align:right;letter-spacing:-0.25px">(199,919)</div>
<div class="a" style="right:24.75px;top:530.00px;font-size:8.8px;color:#3d6fae;font-weight:400;text-align:right;letter-spacing:-0.25px">(199,919)</div>
<div class="a" style="left:62px;top:544.00px;width:114px;overflow:hidden;line-height:1.4;font-size:8.4px;color:#3b69a5;font-weight:400">Placeholder 6</div>
<div class="a" style="right:774.20px;top:543.00px;font-size:8.8px;color:#8a9ab5;font-weight:400;text-align:right;letter-spacing:-0.25px">-</div>
<div class="a" style="right:718.95px;top:543.00px;font-size:8.8px;color:#8a9ab5;font-weight:400;text-align:right;letter-spacing:-0.25px">-</div>
<div class="a" style="right:663.70px;top:543.00px;font-size:8.8px;color:#8a9ab5;font-weight:400;text-align:right;letter-spacing:-0.25px">-</div>
<div class="a" style="right:608.45px;top:543.00px;font-size:8.8px;color:#8a9ab5;font-weight:400;text-align:right;letter-spacing:-0.25px">-</div>
<div class="a" style="right:553.20px;top:543.00px;font-size:8.8px;color:#8a9ab5;font-weight:400;text-align:right;letter-spacing:-0.25px">-</div>
<div class="a" style="right:497.95px;top:543.00px;font-size:8.8px;color:#8a9ab5;font-weight:400;text-align:right;letter-spacing:-0.25px">-</div>
<div class="a" style="right:442.70px;top:543.00px;font-size:8.8px;color:#8a9ab5;font-weight:400;text-align:right;letter-spacing:-0.25px">-</div>
<div class="a" style="right:387.45px;top:543.00px;font-size:8.8px;color:#8a9ab5;font-weight:400;text-align:right;letter-spacing:-0.25px">-</div>
<div class="a" style="right:332.20px;top:543.00px;font-size:8.8px;color:#8a9ab5;font-weight:400;text-align:right;letter-spacing:-0.25px">-</div>
<div class="a" style="right:276.95px;top:543.00px;font-size:8.8px;color:#8a9ab5;font-weight:400;text-align:right;letter-spacing:-0.25px">-</div>
<div class="a" style="right:221.70px;top:543.00px;font-size:8.8px;color:#8a9ab5;font-weight:400;text-align:right;letter-spacing:-0.25px">-</div>
<div class="a" style="right:166.45px;top:543.00px;font-size:8.8px;color:#8a9ab5;font-weight:400;text-align:right;letter-spacing:-0.25px">-</div>
<div class="a" style="right:119.75px;top:543.00px;font-size:8.8px;color:#8a9ab5;font-weight:400;text-align:right;letter-spacing:-0.25px">-</div>
<div class="a" style="right:73.15px;top:543.00px;font-size:8.8px;color:#8a9ab5;font-weight:400;text-align:right;letter-spacing:-0.25px">-</div>
<div class="a" style="right:28.75px;top:543.00px;font-size:8.8px;color:#8a9ab5;font-weight:400;text-align:right;letter-spacing:-0.25px">-</div>
<div class="bx" style="left:17.00px;top:555.00px;width:970.00px;height:1.00px;background:#e2e2e2"></div>
<svg class="bx" style="left:977.5px;top:477.70px" width="5" height="5" viewBox="0 0 5 5"><path d="M0 0 H4 L0 4 Z" fill="#1e8c3a"/></svg>
<svg class="bx" style="left:977.5px;top:490.70px" width="5" height="5" viewBox="0 0 5 5"><path d="M0 0 H4 L0 4 Z" fill="#1e8c3a"/></svg>
<svg class="bx" style="left:977.5px;top:503.70px" width="5" height="5" viewBox="0 0 5 5"><path d="M0 0 H4 L0 4 Z" fill="#1e8c3a"/></svg>
<svg class="bx" style="left:977.5px;top:516.70px" width="5" height="5" viewBox="0 0 5 5"><path d="M0 0 H4 L0 4 Z" fill="#1e8c3a"/></svg>
<svg class="bx" style="left:977.5px;top:542.70px" width="5" height="5" viewBox="0 0 5 5"><path d="M0 0 H4 L0 4 Z" fill="#1e8c3a"/></svg>
<svg class="bx" style="left:977.5px;top:555.70px" width="5" height="5" viewBox="0 0 5 5"><path d="M0 0 H4 L0 4 Z" fill="#1e8c3a"/></svg>
<div class="bx" style="left:987.00px;top:50.00px;width:13.00px;height:509.00px;background:#f3f3f3;border-left:1px solid #e0e0e0"></div>
<svg class="bx" style="left:990px;top:53px" width="8" height="6" viewBox="0 0 8 6"><path d="M4 0.5 L7.5 5.5 H0.5 Z" fill="#6a6a6a"/></svg>
<div class="bx" style="left:990.00px;top:62.00px;width:8.00px;height:101.00px;background:#6e6e6e;border-radius:3.5px"></div>
<svg class="bx" style="left:990px;top:550px" width="8" height="6" viewBox="0 0 8 6"><path d="M4 5.5 L7.5 0.5 H0.5 Z" fill="#6a6a6a"/></svg>
<div class="bx" style="left:0.00px;top:559.00px;width:1000.00px;height:19.00px;background:#e7e9ec"></div>
<svg class="bx" style="left:16px;top:564px" width="6" height="9" viewBox="0 0 6 9"><path d="M5 0.5 L1 4.5 L5 8.5" fill="none" stroke="#b0b0b0" stroke-width="1.1"/></svg>
<svg class="bx" style="left:37px;top:564px" width="6" height="9" viewBox="0 0 6 9"><path d="M1 0.5 L5 4.5 L1 8.5" fill="none" stroke="#777" stroke-width="1.1"/></svg>
<div class="bx" style="left:74.00px;top:559.00px;width:42.00px;height:17.00px;background:#eceef1"></div>
<div class="a" style="left:78.70px;top:564.00px;font-size:8.9px;color:#333;font-weight:400;">How To</div>
<div class="bx" style="left:122.00px;top:559.00px;width:59.00px;height:17.00px;background:#fbf7cc"></div>
<div class="a" style="left:127.60px;top:564.00px;font-size:8.9px;color:#333;font-weight:400;">Inputs 2025</div>
<div class="bx" style="left:186.00px;top:559.00px;width:41.00px;height:17.00px;background:#ffffff"></div>
<div class="a" style="left:192.00px;top:562.00px;font-size:8.9px;color:#2a2a2a;font-weight:700;letter-spacing:-0.2px">IS 2025</div>
<div class="bx" style="left:233.00px;top:559.00px;width:44.00px;height:17.00px;background:#fbf7cc"></div>
<div class="a" style="left:238.70px;top:564.00px;font-size:8.9px;color:#333;font-weight:400;">CF 2025</div>
<div class="bx" style="left:280.00px;top:559.00px;width:48.00px;height:17.00px;background:#dfe2e7"></div>
<div class="a" style="left:287.40px;top:564.00px;font-size:8.9px;color:#333;font-weight:400;">BS 2025</div>
<div class="bx" style="left:332.00px;top:559.00px;width:118.00px;height:17.00px;background:#dfe2e7"></div>
<div class="a" style="left:337.60px;top:564.00px;font-size:8.9px;color:#333;font-weight:400;">Statements Summary 2025</div>
<div class="bx" style="left:458.00px;top:559.00px;width:63.00px;height:17.00px;background:#fbf39a"></div>
<div class="a" style="left:464.60px;top:564.00px;font-size:8.9px;color:#333;font-weight:400;">CAPEX 2025</div>
<div class="bx" style="left:524.00px;top:559.00px;width:58.00px;height:17.00px;background:#fbf7cc"></div>
<div class="a" style="left:530.50px;top:564.00px;font-size:8.9px;color:#333;font-weight:400;">OPEX 2025</div>
<div class="bx" style="left:586.00px;top:559.00px;width:60.00px;height:17.00px;background:#fbf7cc"></div>
<div class="a" style="left:592.00px;top:564.00px;font-size:8.9px;color:#333;font-weight:400;">Inputs 2026</div>
<div class="bx" style="left:651.00px;top:559.00px;width:42.00px;height:17.00px;background:#fbf7cc"></div>
<div class="a" style="left:657.50px;top:564.00px;font-size:8.9px;color:#333;font-weight:400;">IS 2026</div>
<div class="bx" style="left:697.00px;top:559.00px;width:45.00px;height:17.00px;background:#fbf7cc"></div>
<div class="a" style="left:703.00px;top:564.00px;font-size:8.9px;color:#333;font-weight:400;">CF 2026</div>
<div class="bx" style="left:747.00px;top:559.00px;width:45.00px;height:17.00px;background:#dfe2e7"></div>
<div class="a" style="left:752.70px;top:564.00px;font-size:8.9px;color:#333;font-weight:400;">BS 2026</div>
<div class="bx" style="left:192.00px;top:574.00px;width:30.00px;height:2.00px;background:#3f9a63"></div>
<div class="bx" style="left:799.00px;top:560.00px;width:83.00px;height:17.00px;background:#dfe2e7"></div>
<div class="a" style="left:803px;top:564px;width:77px;overflow:hidden;font-size:8.9px;color:#333">Statements Summary 2026</div>
<div class="a" style="left:889.00px;top:562.00px;font-size:8px;color:#333;font-weight:700;">&#183;&#183;&#183;</div>
<div class="a" style="left:907.00px;top:561.00px;font-size:11px;color:#333;font-weight:400;">+</div>
<div class="a" style="left:928.50px;top:563.00px;font-size:9px;color:#444;font-weight:400;">&#8942;</div>
<svg class="bx" style="left:945px;top:565px" width="5" height="7" viewBox="0 0 5 7"><path d="M4.5 0 L0.5 3.5 L4.5 7 Z" fill="#666"/></svg>
<div class="bx" style="left:954.00px;top:566.00px;width:12.00px;height:6.00px;background:#777;border-radius:3px"></div>
<svg class="bx" style="left:980px;top:565px" width="5" height="7" viewBox="0 0 5 7"><path d="M0.5 0 L4.5 3.5 L0.5 7 Z" fill="#666"/></svg>
<div class="bx" style="left:0.00px;top:578.00px;width:1000.00px;height:15.00px;background:#f3f3f3;border-top:1px solid #dadada"></div>
<div class="a" style="left:7.00px;top:583.00px;font-size:7.2px;color:#444;font-weight:400;">Ready</div>
<svg class="bx" style="left:39px;top:582px" width="10" height="9" viewBox="0 0 10 9"><rect x="0.5" y="0.5" width="8" height="7" fill="none" stroke="#444" stroke-width="1"/><line x1="0.5" y1="2.5" x2="8.5" y2="2.5" stroke="#444"/><circle cx="6.5" cy="6" r="2" fill="#444"/></svg>
<svg class="bx" style="left:59px;top:581px" width="11" height="11" viewBox="0 0 11 11"><circle cx="4" cy="1.8" r="1.2" fill="#444"/><path d="M0.5 3.8 H7.5 M4 3.8 V7 L2 10.5 M4 7 L6 10.5" fill="none" stroke="#444" stroke-width="1"/><path d="M6.5 7 L10 10.5 M10 7 L6.5 10.5" stroke="#444" stroke-width="0.9"/></svg>
<div class="a" style="left:72.00px;top:583.00px;font-size:6.7px;color:#262626;font-weight:700;">Accessibility: Investigate</div>
<div class="a" style="left:648.50px;top:583.00px;font-size:6.9px;color:#444;font-weight:400;">Average:  (5,500)</div>
<div class="a" style="left:710.70px;top:583.00px;font-size:6.9px;color:#444;font-weight:400;">Count: 12</div>
<div class="a" style="left:749.70px;top:583.00px;font-size:6.9px;color:#444;font-weight:400;">Sum:  (66,000)</div>
<div class="bx" style="left:808.00px;top:579.00px;width:24.00px;height:14.00px;background:#dcdcdc"></div>
<svg class="bx" style="left:813px;top:581.5px" width="11" height="10" viewBox="0 0 11 10"><rect x="0.5" y="0.5" width="10" height="9" fill="none" stroke="#333" stroke-width="1"/>
<path d="M0.5 3.5 H10.5 M0.5 6.5 H10.5 M3.8 0.5 V9.5 M7.2 0.5 V9.5" stroke="#333" stroke-width="0.9"/></svg>
<svg class="bx" style="left:840px;top:581.5px" width="11" height="10" viewBox="0 0 11 10"><rect x="0.5" y="0.5" width="10" height="9" fill="none" stroke="#444" stroke-width="1"/>
<path d="M3 0.5 V9.5 M5.5 0.5 V9.5 M8 0.5 V9.5" stroke="#444" stroke-width="0.8"/></svg>
<svg class="bx" style="left:866px;top:581.5px" width="11" height="10" viewBox="0 0 11 10"><rect x="0.5" y="0.5" width="10" height="9" fill="none" stroke="#444" stroke-width="1"/>
<path d="M5.5 0.5 V6 H0.5" fill="none" stroke="#444" stroke-width="0.9"/></svg>
<div class="bx" style="left:889.00px;top:587.00px;width:4.00px;height:1.00px;background:#555"></div>
<div class="bx" style="left:896.00px;top:587.00px;width:66.00px;height:1.00px;background:#777"></div>
<div class="bx" style="left:928.00px;top:584.00px;width:3.00px;height:8.00px;background:#444"></div>
<div class="bx" style="left:965.00px;top:587.00px;width:5.00px;height:1.00px;background:#555"></div>
<div class="bx" style="left:967.00px;top:585.00px;width:1.00px;height:5.00px;background:#555"></div>
<div class="a" style="left:979.00px;top:583.00px;font-size:6.6px;color:#444;font-weight:400;">100%</div>
</body></html>
